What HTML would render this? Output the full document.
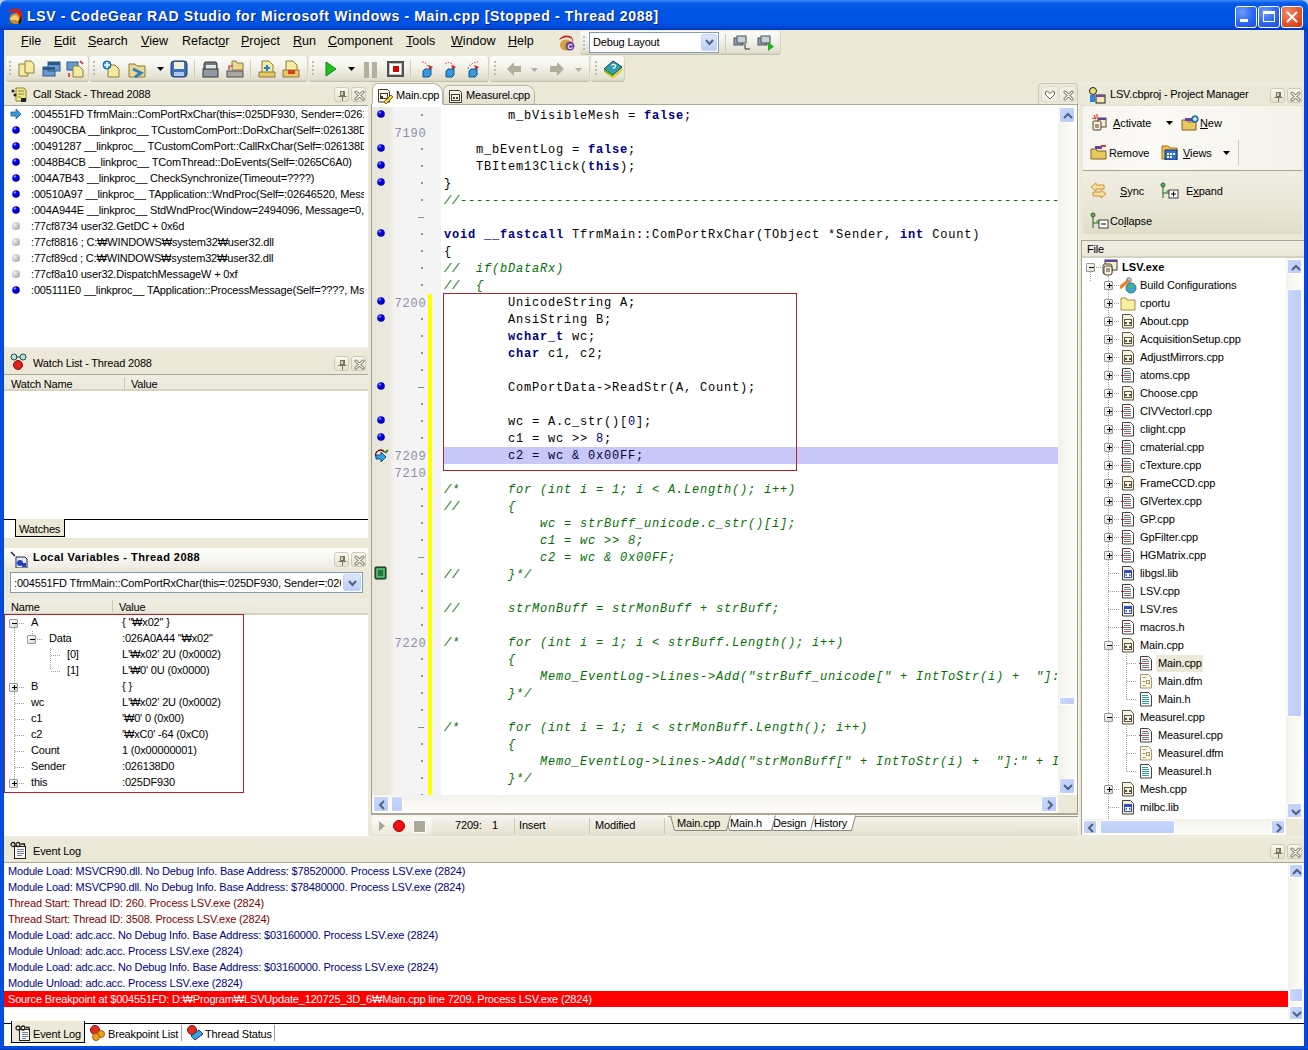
<!DOCTYPE html><html><head><meta charset="utf-8"><style>
html,body{margin:0;padding:0;}
body{width:1308px;height:1050px;overflow:hidden;position:relative;background:#ece9d8;font-family:"Liberation Sans",sans-serif;}
div{box-sizing:border-box;}
</style></head><body>
<div style="position:absolute;left:0px;top:0px;width:1308px;height:1050px;background:#ece9d8"></div>
<div style="position:absolute;left:0px;top:0px;width:8px;height:8px;background:#b8c8e0"></div>
<div style="position:absolute;left:1300px;top:0px;width:8px;height:8px;background:#b8c8e0"></div>
<div style="position:absolute;left:0px;top:0px;width:1308px;height:30px;background:linear-gradient(#3c8cf7 0px,#0a5ae8 3px,#0054e3 12px,#0055e6 22px,#0048d6 27px,#0036bd 30px);border-radius:7px 7px 0 0"></div>
<div style="position:absolute;left:0px;top:30px;width:4px;height:1020px;background:linear-gradient(90deg,#0843d6,#0054e3 2px,#0041d1 4px)"></div>
<div style="position:absolute;left:1304px;top:30px;width:4px;height:1020px;background:linear-gradient(90deg,#0041d1,#0054e3 2px,#0028a8 4px)"></div>
<div style="position:absolute;left:0px;top:1046px;width:1308px;height:4px;background:linear-gradient(#0045d7,#0054e3 2px,#0030b0 4px)"></div>
<svg style="position:absolute;left:6px;top:7px" width="18" height="18" viewBox="0 0 18 18"><ellipse cx="10" cy="11.5" rx="6.5" ry="5.5" fill="#c89030"/><path d="M4 13 Q5 8 10 8.5 Q13 9 12 14 Q9 12 4 13Z" fill="#f0d070"/><path d="M1.5 6 Q4 1 11 1.5 Q17 3 16.5 10 L15 15 Q14 8 11 6 Q6 4 1.5 6Z" fill="#d02018"/><path d="M15 9 Q17 13 14 17 L12 16 Z" fill="#301000"/><path d="M2 15 Q3 17 6 17" stroke="#208020" stroke-width="1.2" fill="none"/></svg>
<div style="position:absolute;left:27px;top:7.75px;white-space:pre;font:14px/16.80px 'Liberation Sans', sans-serif;color:#fff;letter-spacing:0.64px;font-weight:bold;text-shadow:1px 1px 0 #0a1e7a">LSV - CodeGear RAD Studio for Microsoft Windows - Main.cpp [Stopped - Thread 2088]</div>
<div style="position:absolute;left:1235px;top:6px;width:22px;height:22px;border:1px solid #fff;border-radius:3px;background:radial-gradient(circle at 30% 25%,#6c9cff,#2a62f0 60%,#1f50d8)"><div style="position:absolute;left:4px;top:12px;width:8px;height:3px;background:#fff"></div></div>
<div style="position:absolute;left:1258px;top:6px;width:22px;height:22px;border:1px solid #fff;border-radius:3px;background:radial-gradient(circle at 30% 25%,#6c9cff,#2a62f0 60%,#1f50d8)"><div style="position:absolute;left:4px;top:4px;width:12px;height:11px;border:1px solid #fff;border-top:3px solid #fff"></div></div>
<div style="position:absolute;left:1281px;top:6px;width:22px;height:22px;border:1px solid #fff;border-radius:3px;background:radial-gradient(circle at 30% 25%,#f08a6a,#e2522a 60%,#c83a18)"><svg style="position:absolute;left:4px;top:4px" width="12" height="12"><path d="M1 1L11 11M11 1L1 11" stroke="#fff" stroke-width="2"/></svg></div>
<div style="position:absolute;left:4px;top:30px;width:1300px;height:26px;background:#ece9d8"></div>
<div style="position:absolute;left:21px;top:34.17px;white-space:pre;font:12.5px/15.00px 'Liberation Sans', sans-serif;color:#000;letter-spacing:0.02px;"><u>F</u>ile</div>
<div style="position:absolute;left:54px;top:34.17px;white-space:pre;font:12.5px/15.00px 'Liberation Sans', sans-serif;color:#000;letter-spacing:0.02px;"><u>E</u>dit</div>
<div style="position:absolute;left:88px;top:34.17px;white-space:pre;font:12.5px/15.00px 'Liberation Sans', sans-serif;color:#000;letter-spacing:0.02px;"><u>S</u>earch</div>
<div style="position:absolute;left:141px;top:34.17px;white-space:pre;font:12.5px/15.00px 'Liberation Sans', sans-serif;color:#000;letter-spacing:0.02px;"><u>V</u>iew</div>
<div style="position:absolute;left:182px;top:34.17px;white-space:pre;font:12.5px/15.00px 'Liberation Sans', sans-serif;color:#000;letter-spacing:0.02px;">Refact<u>o</u>r</div>
<div style="position:absolute;left:241px;top:34.17px;white-space:pre;font:12.5px/15.00px 'Liberation Sans', sans-serif;color:#000;letter-spacing:0.02px;"><u>P</u>roject</div>
<div style="position:absolute;left:293px;top:34.17px;white-space:pre;font:12.5px/15.00px 'Liberation Sans', sans-serif;color:#000;letter-spacing:0.02px;"><u>R</u>un</div>
<div style="position:absolute;left:328px;top:34.17px;white-space:pre;font:12.5px/15.00px 'Liberation Sans', sans-serif;color:#000;letter-spacing:0.02px;"><u>C</u>omponent</div>
<div style="position:absolute;left:406px;top:34.17px;white-space:pre;font:12.5px/15.00px 'Liberation Sans', sans-serif;color:#000;letter-spacing:0.02px;"><u>T</u>ools</div>
<div style="position:absolute;left:451px;top:34.17px;white-space:pre;font:12.5px/15.00px 'Liberation Sans', sans-serif;color:#000;letter-spacing:0.02px;"><u>W</u>indow</div>
<div style="position:absolute;left:508px;top:34.17px;white-space:pre;font:12.5px/15.00px 'Liberation Sans', sans-serif;color:#000;letter-spacing:0.02px;"><u>H</u>elp</div>
<svg style="position:absolute;left:557px;top:34px" width="18" height="18" viewBox="0 0 18 18"><path d="M2 6 Q5 0 13 2 Q17 4 16 9 L15 5 Q11 2 6 4 Z" fill="#c8201a"/><ellipse cx="9" cy="11" rx="6" ry="5.5" fill="#d9a040"/><circle cx="13" cy="12" r="4.5" fill="#7040a0"/><text x="10.5" y="15" font-size="7" fill="#fff" font-family="Liberation Sans" font-weight="bold">C</text></svg>
<div style="position:absolute;left:580px;top:31px;width:201px;height:24px;background:linear-gradient(#fcfcf9,#f4f3ec 40%,#e3e0d0 90%,#d6d2c0);border-radius:3px;border-bottom:1px solid #c4c0ac;border-right:1px solid #d8d4c2"></div>
<div style="position:absolute;left:583px;top:36px;width:2px;height:2px;background:#c1bda8"></div>
<div style="position:absolute;left:583px;top:40px;width:2px;height:2px;background:#c1bda8"></div>
<div style="position:absolute;left:583px;top:44px;width:2px;height:2px;background:#c1bda8"></div>
<div style="position:absolute;left:583px;top:48px;width:2px;height:2px;background:#c1bda8"></div>
<div style="position:absolute;left:589px;top:32px;width:130px;height:21px;background:#fff;border:1px solid #7f9db9"></div>
<div style="position:absolute;left:593px;top:35.59px;white-space:pre;font:11px/13.20px 'Liberation Sans', sans-serif;color:#000;letter-spacing:-0.17px;">Debug Layout</div>
<div style="position:absolute;left:701px;top:34px;width:16px;height:17px;background:linear-gradient(#dfe8fb,#b9cdf6);border:1px solid #c3d3fd;border-radius:2px"><svg style="position:absolute;left:3px;top:4px" width="9" height="7"><path d="M1 1L4.5 5L8 1" stroke="#4d6185" stroke-width="2" fill="none"/></svg></div>
<div style="position:absolute;left:725px;top:34px;width:1px;height:18px;background:#d0ccb8"></div>
<svg style="position:absolute;left:733px;top:35px" width="18" height="16"><rect x="1" y="3" width="9" height="7" fill="#9aa8b4" stroke="#46505a"/><rect x="4" y="1" width="9" height="7" fill="#c8d0d8" stroke="#46505a"/><path d="M12 9v5h5" stroke="#303030" fill="none"/></svg>
<svg style="position:absolute;left:757px;top:35px" width="18" height="16"><rect x="1" y="3" width="9" height="7" fill="#9aa8b4" stroke="#46505a"/><rect x="4" y="1" width="9" height="7" fill="#c8d0d8" stroke="#46505a"/><path d="M11 7l6 4.5-6 4.5z" fill="#20b020"/></svg>
<div style="position:absolute;left:6px;top:56px;width:83px;height:26px;background:linear-gradient(#fcfcf9,#f4f3ec 40%,#e3e0d0 90%,#d6d2c0);border-radius:3px;border-bottom:1px solid #c4c0ac;border-right:1px solid #d8d4c2"></div>
<div style="position:absolute;left:90px;top:56px;width:218px;height:26px;background:linear-gradient(#fcfcf9,#f4f3ec 40%,#e3e0d0 90%,#d6d2c0);border-radius:3px;border-bottom:1px solid #c4c0ac;border-right:1px solid #d8d4c2"></div>
<div style="position:absolute;left:309px;top:56px;width:180px;height:26px;background:linear-gradient(#fcfcf9,#f4f3ec 40%,#e3e0d0 90%,#d6d2c0);border-radius:3px;border-bottom:1px solid #c4c0ac;border-right:1px solid #d8d4c2"></div>
<div style="position:absolute;left:490px;top:56px;width:100px;height:26px;background:linear-gradient(#fcfcf9,#f4f3ec 40%,#e3e0d0 90%,#d6d2c0);border-radius:3px;border-bottom:1px solid #c4c0ac;border-right:1px solid #d8d4c2"></div>
<div style="position:absolute;left:591px;top:56px;width:34px;height:26px;background:linear-gradient(#fcfcf9,#f4f3ec 40%,#e3e0d0 90%,#d6d2c0);border-radius:3px;border-bottom:1px solid #c4c0ac;border-right:1px solid #d8d4c2"></div>
<div style="position:absolute;left:9px;top:61px;width:2px;height:2px;background:#c1bda8"></div>
<div style="position:absolute;left:9px;top:65px;width:2px;height:2px;background:#c1bda8"></div>
<div style="position:absolute;left:9px;top:69px;width:2px;height:2px;background:#c1bda8"></div>
<div style="position:absolute;left:9px;top:73px;width:2px;height:2px;background:#c1bda8"></div>
<div style="position:absolute;left:93px;top:61px;width:2px;height:2px;background:#c1bda8"></div>
<div style="position:absolute;left:93px;top:65px;width:2px;height:2px;background:#c1bda8"></div>
<div style="position:absolute;left:93px;top:69px;width:2px;height:2px;background:#c1bda8"></div>
<div style="position:absolute;left:93px;top:73px;width:2px;height:2px;background:#c1bda8"></div>
<div style="position:absolute;left:312px;top:61px;width:2px;height:2px;background:#c1bda8"></div>
<div style="position:absolute;left:312px;top:65px;width:2px;height:2px;background:#c1bda8"></div>
<div style="position:absolute;left:312px;top:69px;width:2px;height:2px;background:#c1bda8"></div>
<div style="position:absolute;left:312px;top:73px;width:2px;height:2px;background:#c1bda8"></div>
<div style="position:absolute;left:494px;top:61px;width:2px;height:2px;background:#c1bda8"></div>
<div style="position:absolute;left:494px;top:65px;width:2px;height:2px;background:#c1bda8"></div>
<div style="position:absolute;left:494px;top:69px;width:2px;height:2px;background:#c1bda8"></div>
<div style="position:absolute;left:494px;top:73px;width:2px;height:2px;background:#c1bda8"></div>
<div style="position:absolute;left:595px;top:61px;width:2px;height:2px;background:#c1bda8"></div>
<div style="position:absolute;left:595px;top:65px;width:2px;height:2px;background:#c1bda8"></div>
<div style="position:absolute;left:595px;top:69px;width:2px;height:2px;background:#c1bda8"></div>
<div style="position:absolute;left:595px;top:73px;width:2px;height:2px;background:#c1bda8"></div>
<svg style="position:absolute;left:18px;top:60px" width="18" height="18"><path d="M1 4h6l3 3v9H1z" fill="#f5eaa0" stroke="#8c8040"/><path d="M7 1h6l3 3v9H7z" fill="#f5eaa0" stroke="#8c8040"/></svg>
<svg style="position:absolute;left:42px;top:60px" width="19" height="18"><rect x="1" y="7" width="12" height="9" fill="#6a9ad0" stroke="#2c5a8c"/><rect x="6" y="2" width="12" height="9" fill="#6a9ad0" stroke="#2c5a8c"/><rect x="6" y="2" width="12" height="3" fill="#2c5a8c"/><rect x="1" y="7" width="12" height="3" fill="#2c5a8c"/></svg>
<svg style="position:absolute;left:66px;top:60px" width="19" height="18"><rect x="1" y="2" width="11" height="8" fill="#6a9ad0" stroke="#2c5a8c"/><path d="M7 6h6l4 4v7H7z" fill="#f5eaa0" stroke="#8c8040"/><path d="M14 1l3 3M3 13l0 4" stroke="#d02020" stroke-width="1.5"/></svg>
<svg style="position:absolute;left:102px;top:60px" width="19" height="18"><path d="M6 5h7l4 4v8H6z" fill="#f5eaa0" stroke="#8c8040"/><circle cx="5" cy="5" r="4" fill="#3ca0e0" stroke="#1060a0"/><path d="M5 2v6M2 5h6" stroke="#fff" stroke-width="1.5"/></svg>
<svg style="position:absolute;left:128px;top:61px" width="20" height="18"><path d="M1 3h6l2 2h8v11H1z" fill="#e8d890" stroke="#8c7840"/><path d="M5 8l8 4-6 4" stroke="#3080c0" stroke-width="3" fill="none"/></svg>
<svg style="position:absolute;left:157px;top:67px" width="8" height="5"><path d="M0 0h7l-3.5 4z" fill="#000"/></svg>
<svg style="position:absolute;left:170px;top:60px" width="18" height="18"><rect x="1" y="1" width="16" height="16" rx="3" fill="#3a70b8" stroke="#1a3a70"/><rect x="4" y="2" width="10" height="7" fill="#f4f0d8"/><rect x="4" y="12" width="10" height="4" fill="#b0c8e8"/></svg>
<div style="position:absolute;left:194px;top:60px;width:1px;height:18px;background:#d0ccb8"></div>
<svg style="position:absolute;left:202px;top:60px" width="18" height="18"><rect x="2" y="2" width="13" height="13" rx="2" fill="#707880" stroke="#303840"/><rect x="4" y="5" width="10" height="6" fill="#e8e8e0"/><rect x="1" y="9" width="15" height="8" fill="#9098a0" stroke="#303840"/></svg>
<svg style="position:absolute;left:226px;top:60px" width="18" height="18"><path d="M6 1h4l1 2h6v7H6z" fill="#e8d890" stroke="#8c7840"/><rect x="1" y="11" width="16" height="6" fill="#a8a8a8" stroke="#505050"/><path d="M3 10v-4h4" stroke="#d02020" stroke-width="1.2" fill="none"/></svg>
<div style="position:absolute;left:250px;top:60px;width:1px;height:18px;background:#d0ccb8"></div>
<svg style="position:absolute;left:258px;top:60px" width="18" height="18"><path d="M4 1h7l4 4v8H4z" fill="#f5eaa0" stroke="#8c8040"/><path d="M1 12h16v5H1z" fill="#e8c860" stroke="#8c7840"/><path d="M9 5v6M6 8h6" stroke="#2080d0" stroke-width="2"/></svg>
<svg style="position:absolute;left:282px;top:60px" width="18" height="18"><path d="M4 1h7l4 4v8H4z" fill="#f5eaa0" stroke="#8c8040"/><path d="M1 10h16v7H1z" fill="#e8c860" stroke="#8c7840"/><rect x="6" y="10" width="7" height="4" fill="#d04020"/></svg>
<svg style="position:absolute;left:325px;top:61px" width="12" height="16"><path d="M1 1l10 7-10 7z" fill="#20c020" stroke="#108010"/></svg>
<svg style="position:absolute;left:348px;top:67px" width="8" height="5"><path d="M0 0h7l-3.5 4z" fill="#000"/></svg>
<div style="position:absolute;left:364px;top:62px;width:5px;height:16px;background:#b4b0a0"></div>
<div style="position:absolute;left:372px;top:62px;width:5px;height:16px;background:#b4b0a0"></div>
<div style="position:absolute;left:387px;top:61px;width:17px;height:16px;background:#fff;border:2px solid #505050;box-shadow:inset 0 0 0 1px #c0c0c0"><div style="position:absolute;left:4px;top:3px;width:6px;height:6px;background:#e00000"></div></div>
<div style="position:absolute;left:410px;top:60px;width:1px;height:18px;background:#d0ccb8"></div>
<svg style="position:absolute;left:420px;top:60px" width="16" height="18"><path d="M2 2q4 0 6 5" stroke="#d02020" stroke-dasharray="1.5 1.5" fill="none"/><path d="M8 5l5 2-3 3z" fill="#e02020"/><path d="M3 11l2-2h6v6l-2 2H3z" fill="#3a98e0" stroke="#10508c"/></svg>
<svg style="position:absolute;left:443px;top:60px" width="16" height="18"><path d="M2 4q5-4 10 3" stroke="#d02020" stroke-dasharray="1.5 1.5" fill="none"/><path d="M8 5l5 2-3 3z" fill="#e02020"/><path d="M3 11l2-2h6v6l-2 2H3z" fill="#3a98e0" stroke="#10508c"/></svg>
<svg style="position:absolute;left:466px;top:60px" width="16" height="18"><path d="M2 9q3-7 10-7" stroke="#d02020" stroke-dasharray="1.5 1.5" fill="none"/><path d="M8 5l5 2-3 3z" fill="#e02020"/><path d="M3 11l2-2h6v6l-2 2H3z" fill="#3a98e0" stroke="#10508c"/></svg>
<svg style="position:absolute;left:506px;top:61px" width="16" height="16"><path d="M1 8l7-7v4h7v6H8v4z" fill="#b0ae9c"/></svg>
<svg style="position:absolute;left:531px;top:68px" width="8" height="5"><path d="M0 0h7l-3.5 4z" fill="#b0ae9c"/></svg>
<svg style="position:absolute;left:549px;top:61px" width="16" height="16"><path d="M15 8l-7-7v4H1v6h7v4z" fill="#b0ae9c"/></svg>
<svg style="position:absolute;left:575px;top:68px" width="8" height="5"><path d="M0 0h7l-3.5 4z" fill="#b0ae9c"/></svg>
<svg style="position:absolute;left:602px;top:59px" width="22" height="20"><path d="M2 10l9-8 9 6-9 8z" fill="#30a0b0" stroke="#104050"/><path d="M2.5 12l8.5 6 9.5-8" stroke="#e0d020" stroke-width="2.2" fill="none"/><path d="M2 10v2l9 6v-2z" fill="#60b030"/><path d="M9.5 6.5q1.5-2 3.5-0.5t-1.5 3v1" stroke="#fff" stroke-width="1.3" fill="none"/></svg>
<div style="position:absolute;left:4px;top:82px;width:364px;height:754px;background:#fff"></div>
<div style="position:absolute;left:4px;top:82px;width:364px;height:24px;background:linear-gradient(#f1efe5,#ece9d9 4px,#ebe8d8);border-bottom:1px solid #aca899"></div>
<div style="position:absolute;left:33px;top:87.59px;white-space:pre;font:11px/13.20px 'Liberation Sans', sans-serif;color:#000;letter-spacing:-0.17px;">Call Stack - Thread 2088</div>
<svg style="position:absolute;left:10px;top:86px" width="18" height="18"><path d="M6 2h8l2 2v11H6z" fill="#eee890" stroke="#8c8030"/><path d="M8 5h6M8 8h6M8 11h3" stroke="#8c8030"/><circle cx="3" cy="5" r="1.5" fill="#222"/><circle cx="5" cy="9" r="1.5" fill="#222"/><rect x="11" y="12" width="5" height="4" fill="#222"/></svg>
<div style="position:absolute;left:334px;top:87px;width:15px;height:15px;border:1px solid #cfcbb6;border-radius:3px;background:linear-gradient(#f8f7f0,#e6e2d0)"><svg style="position:absolute;left:2px;top:2px" width="10" height="12"><rect x="3" y="1" width="5" height="5" fill="#77735a"/><rect x="4" y="2" width="2" height="3" fill="#d8d4c0"/><path d="M1.5 6.5h8M5.5 7v4" stroke="#77735a" fill="none"/></svg></div>
<div style="position:absolute;left:351px;top:87px;width:15px;height:15px;border:1px solid #cfcbb6;border-radius:3px;background:linear-gradient(#f8f7f0,#e6e2d0)"><svg style="position:absolute;left:2px;top:2px" width="11" height="11"><path d="M2 2L9 9M9 2L2 9" stroke="#6e6a55" stroke-width="3" stroke-linecap="round"/><path d="M2 2L9 9M9 2L2 9" stroke="#fff" stroke-width="1.2" stroke-linecap="round"/></svg></div>
<div style="position:absolute;left:4px;top:105px;width:360px;height:242px;overflow:hidden">
<svg style="position:absolute;left:6px;top:3px" width="12" height="12"><path d="M1 4h5V1l5 5-5 5V8H1z" fill="#3a9ad8" stroke="#1a60a0" stroke-width="0.8"/></svg>
<div style="position:absolute;left:27px;top:2.59px;white-space:pre;font:11px/13.20px 'Liberation Sans', sans-serif;color:#000;letter-spacing:-0.17px;">:004551FD TfrmMain::ComPortRxChar(this=:025DF930, Sender=:026138D0, Count=1)</div>
<svg style="position:absolute;left:7px;top:20px" width="10" height="10"><defs><radialGradient id="g12_25" cx="35%" cy="30%" r="70%"><stop offset="0" stop-color="#a0b0ff"/><stop offset="0.35" stop-color="#0000f0"/><stop offset="1" stop-color="#0000a0"/></radialGradient></defs><circle cx="5" cy="5" r="3.8" fill="url(#g12_25)"/></svg>
<div style="position:absolute;left:27px;top:18.59px;white-space:pre;font:11px/13.20px 'Liberation Sans', sans-serif;color:#000;letter-spacing:-0.17px;">:00490CBA __linkproc__ TCustomComPort::DoRxChar(Self=:026138D0, Count=1)</div>
<svg style="position:absolute;left:7px;top:36px" width="10" height="10"><defs><radialGradient id="g12_41" cx="35%" cy="30%" r="70%"><stop offset="0" stop-color="#a0b0ff"/><stop offset="0.35" stop-color="#0000f0"/><stop offset="1" stop-color="#0000a0"/></radialGradient></defs><circle cx="5" cy="5" r="3.8" fill="url(#g12_41)"/></svg>
<div style="position:absolute;left:27px;top:34.59px;white-space:pre;font:11px/13.20px 'Liberation Sans', sans-serif;color:#000;letter-spacing:-0.17px;">:00491287 __linkproc__ TCustomComPort::CallRxChar(Self=:026138D0)</div>
<svg style="position:absolute;left:7px;top:52px" width="10" height="10"><defs><radialGradient id="g12_57" cx="35%" cy="30%" r="70%"><stop offset="0" stop-color="#a0b0ff"/><stop offset="0.35" stop-color="#0000f0"/><stop offset="1" stop-color="#0000a0"/></radialGradient></defs><circle cx="5" cy="5" r="3.8" fill="url(#g12_57)"/></svg>
<div style="position:absolute;left:27px;top:50.59px;white-space:pre;font:11px/13.20px 'Liberation Sans', sans-serif;color:#000;letter-spacing:-0.17px;">:0048B4CB __linkproc__ TComThread::DoEvents(Self=:0265C6A0)</div>
<svg style="position:absolute;left:7px;top:68px" width="10" height="10"><defs><radialGradient id="g12_73" cx="35%" cy="30%" r="70%"><stop offset="0" stop-color="#a0b0ff"/><stop offset="0.35" stop-color="#0000f0"/><stop offset="1" stop-color="#0000a0"/></radialGradient></defs><circle cx="5" cy="5" r="3.8" fill="url(#g12_73)"/></svg>
<div style="position:absolute;left:27px;top:66.59px;white-space:pre;font:11px/13.20px 'Liberation Sans', sans-serif;color:#000;letter-spacing:-0.17px;">:004A7B43 __linkproc__ CheckSynchronize(Timeout=????)</div>
<svg style="position:absolute;left:7px;top:84px" width="10" height="10"><defs><radialGradient id="g12_89" cx="35%" cy="30%" r="70%"><stop offset="0" stop-color="#a0b0ff"/><stop offset="0.35" stop-color="#0000f0"/><stop offset="1" stop-color="#0000a0"/></radialGradient></defs><circle cx="5" cy="5" r="3.8" fill="url(#g12_89)"/></svg>
<div style="position:absolute;left:27px;top:82.59px;white-space:pre;font:11px/13.20px 'Liberation Sans', sans-serif;color:#000;letter-spacing:-0.17px;">:00510A97 __linkproc__ TApplication::WndProc(Self=:02646520, Message=????)</div>
<svg style="position:absolute;left:7px;top:100px" width="10" height="10"><defs><radialGradient id="g12_105" cx="35%" cy="30%" r="70%"><stop offset="0" stop-color="#a0b0ff"/><stop offset="0.35" stop-color="#0000f0"/><stop offset="1" stop-color="#0000a0"/></radialGradient></defs><circle cx="5" cy="5" r="3.8" fill="url(#g12_105)"/></svg>
<div style="position:absolute;left:27px;top:98.59px;white-space:pre;font:11px/13.20px 'Liberation Sans', sans-serif;color:#000;letter-spacing:-0.17px;">:004A944E __linkproc__ StdWndProc(Window=2494096, Message=0, WParam=0)</div>
<div style="position:absolute;left:8px;top:117px;width:8px;height:8px;border-radius:50%;background:radial-gradient(circle at 35% 35%,#f0f0f0,#b8b8b8 60%,#888);"></div>
<div style="position:absolute;left:27px;top:114.59px;white-space:pre;font:11px/13.20px 'Liberation Sans', sans-serif;color:#000;letter-spacing:-0.17px;">:77cf8734 user32.GetDC + 0x6d</div>
<div style="position:absolute;left:8px;top:133px;width:8px;height:8px;border-radius:50%;background:radial-gradient(circle at 35% 35%,#f0f0f0,#b8b8b8 60%,#888);"></div>
<div style="position:absolute;left:27px;top:130.59px;white-space:pre;font:11px/13.20px 'Liberation Sans', sans-serif;color:#000;letter-spacing:-0.17px;">:77cf8816 ; C:₩WINDOWS₩system32₩user32.dll</div>
<div style="position:absolute;left:8px;top:149px;width:8px;height:8px;border-radius:50%;background:radial-gradient(circle at 35% 35%,#f0f0f0,#b8b8b8 60%,#888);"></div>
<div style="position:absolute;left:27px;top:146.59px;white-space:pre;font:11px/13.20px 'Liberation Sans', sans-serif;color:#000;letter-spacing:-0.17px;">:77cf89cd ; C:₩WINDOWS₩system32₩user32.dll</div>
<div style="position:absolute;left:8px;top:165px;width:8px;height:8px;border-radius:50%;background:radial-gradient(circle at 35% 35%,#f0f0f0,#b8b8b8 60%,#888);"></div>
<div style="position:absolute;left:27px;top:162.59px;white-space:pre;font:11px/13.20px 'Liberation Sans', sans-serif;color:#000;letter-spacing:-0.17px;">:77cf8a10 user32.DispatchMessageW + 0xf</div>
<svg style="position:absolute;left:7px;top:180px" width="10" height="10"><defs><radialGradient id="g12_185" cx="35%" cy="30%" r="70%"><stop offset="0" stop-color="#a0b0ff"/><stop offset="0.35" stop-color="#0000f0"/><stop offset="1" stop-color="#0000a0"/></radialGradient></defs><circle cx="5" cy="5" r="3.8" fill="url(#g12_185)"/></svg>
<div style="position:absolute;left:27px;top:178.59px;white-space:pre;font:11px/13.20px 'Liberation Sans', sans-serif;color:#000;letter-spacing:-0.17px;">:005111E0 __linkproc__ TApplication::ProcessMessage(Self=????, Msg=????)</div>
</div>
<div style="position:absolute;left:4px;top:347px;width:364px;height:28px;background:linear-gradient(#f1efe5,#ece9d9 4px,#ebe8d8);border-bottom:1px solid #aca899"></div>
<div style="position:absolute;left:33px;top:356.59px;white-space:pre;font:11px/13.20px 'Liberation Sans', sans-serif;color:#000;letter-spacing:-0.17px;">Watch List - Thread 2088</div>
<svg style="position:absolute;left:10px;top:353px" width="18" height="18"><circle cx="4" cy="4" r="3" fill="#b8e0d8" stroke="#205050"/><circle cx="13" cy="4" r="3" fill="#b8e0d8" stroke="#205050"/><path d="M6 4h4" stroke="#205050"/><circle cx="8" cy="12" r="4.5" fill="#e02020" stroke="#801010"/></svg>
<div style="position:absolute;left:334px;top:356px;width:15px;height:15px;border:1px solid #cfcbb6;border-radius:3px;background:linear-gradient(#f8f7f0,#e6e2d0)"><svg style="position:absolute;left:2px;top:2px" width="10" height="12"><rect x="3" y="1" width="5" height="5" fill="#77735a"/><rect x="4" y="2" width="2" height="3" fill="#d8d4c0"/><path d="M1.5 6.5h8M5.5 7v4" stroke="#77735a" fill="none"/></svg></div>
<div style="position:absolute;left:351px;top:356px;width:15px;height:15px;border:1px solid #cfcbb6;border-radius:3px;background:linear-gradient(#f8f7f0,#e6e2d0)"><svg style="position:absolute;left:2px;top:2px" width="11" height="11"><path d="M2 2L9 9M9 2L2 9" stroke="#6e6a55" stroke-width="3" stroke-linecap="round"/><path d="M2 2L9 9M9 2L2 9" stroke="#fff" stroke-width="1.2" stroke-linecap="round"/></svg></div>
<div style="position:absolute;left:4px;top:375px;width:364px;height:16px;background:linear-gradient(#f0eee4,#ebe8da);border-bottom:2px solid #d6d2c2"></div>
<div style="position:absolute;left:124px;top:377px;width:1px;height:12px;background:#cbc7b4"></div>
<div style="position:absolute;left:11px;top:377.59px;white-space:pre;font:11px/13.20px 'Liberation Sans', sans-serif;color:#000;letter-spacing:-0.17px;">Watch Name</div>
<div style="position:absolute;left:131px;top:377.59px;white-space:pre;font:11px/13.20px 'Liberation Sans', sans-serif;color:#000;letter-spacing:-0.17px;">Value</div>
<div style="position:absolute;left:4px;top:519px;width:364px;height:19px;background:#fff;border-top:1px solid #000"></div>
<div style="position:absolute;left:15px;top:519px;width:50px;height:18px;background:#ece9d8;border:1px solid #000;border-top:none"></div>
<div style="position:absolute;left:19px;top:522.59px;white-space:pre;font:11px/13.20px 'Liberation Sans', sans-serif;color:#000;letter-spacing:-0.17px;">Watches</div>
<div style="position:absolute;left:4px;top:538px;width:364px;height:10px;background:#ece9d8"></div>
<div style="position:absolute;left:4px;top:548px;width:364px;height:21px;background:linear-gradient(#fefefd,#f7f6f1 50%,#eeece2);border-bottom:1px solid #aca899"></div>
<div style="position:absolute;left:33px;top:550.59px;white-space:pre;font:11px/13.20px 'Liberation Sans', sans-serif;color:#000;letter-spacing:0.45px;font-weight:bold">Local Variables - Thread 2088</div>
<svg style="position:absolute;left:10px;top:551px" width="18" height="18"><path d="M1 1l4 4" stroke="#222" stroke-width="1.5"/><path d="M6 6h9l2 2v9H6z" fill="#e8eef8" stroke="#202050"/><circle cx="10" cy="12" r="3" fill="#2040c0"/><rect x="12" y="12" width="4" height="4" fill="#2040c0"/></svg>
<div style="position:absolute;left:334px;top:552px;width:15px;height:15px;border:1px solid #cfcbb6;border-radius:3px;background:linear-gradient(#f8f7f0,#e6e2d0)"><svg style="position:absolute;left:2px;top:2px" width="10" height="12"><rect x="3" y="1" width="5" height="5" fill="#77735a"/><rect x="4" y="2" width="2" height="3" fill="#d8d4c0"/><path d="M1.5 6.5h8M5.5 7v4" stroke="#77735a" fill="none"/></svg></div>
<div style="position:absolute;left:351px;top:552px;width:15px;height:15px;border:1px solid #cfcbb6;border-radius:3px;background:linear-gradient(#f8f7f0,#e6e2d0)"><svg style="position:absolute;left:2px;top:2px" width="11" height="11"><path d="M2 2L9 9M9 2L2 9" stroke="#6e6a55" stroke-width="3" stroke-linecap="round"/><path d="M2 2L9 9M9 2L2 9" stroke="#fff" stroke-width="1.2" stroke-linecap="round"/></svg></div>
<div style="position:absolute;left:4px;top:568px;width:364px;height:30px;background:#ece9d8"></div>
<div style="position:absolute;left:10px;top:572px;width:353px;height:21px;background:#fff;border:1px solid #7f9db9"></div>
<div style="position:absolute;left:11px;top:573px;width:331px;height:19px;overflow:hidden">
<div style="position:absolute;left:3px;top:3.59px;white-space:pre;font:11px/13.20px 'Liberation Sans', sans-serif;color:#000;letter-spacing:-0.17px;">:004551FD TfrmMain::ComPortRxChar(this=:025DF930, Sender=:026138D0, Count=1)</div>
</div>
<div style="position:absolute;left:343px;top:574px;width:18px;height:17px;background:linear-gradient(#dfe8fb,#b9cdf6);border:1px solid #c3d3fd;border-radius:2px;box-shadow:-2px 0 0 #fff"><svg style="position:absolute;left:4px;top:5px" width="9" height="7"><path d="M1 1L4.5 5L8 1" stroke="#4d6185" stroke-width="2" fill="none"/></svg></div>
<div style="position:absolute;left:4px;top:598px;width:364px;height:17px;background:linear-gradient(#f0eee4,#ebe8da);border-bottom:2px solid #d6d2c2"></div>
<div style="position:absolute;left:112px;top:600px;width:1px;height:12px;background:#cbc7b4"></div>
<div style="position:absolute;left:11px;top:600.59px;white-space:pre;font:11px/13.20px 'Liberation Sans', sans-serif;color:#000;letter-spacing:-0.17px;">Name</div>
<div style="position:absolute;left:119px;top:600.59px;white-space:pre;font:11px/13.20px 'Liberation Sans', sans-serif;color:#000;letter-spacing:-0.17px;">Value</div>
<div style="position:absolute;left:14px;top:628px;width:1px;height:156px;background:repeating-linear-gradient(#a0a0a0 0 1px,transparent 1px 2px)"></div>
<div style="position:absolute;left:32px;top:631px;width:1px;height:3px;background:repeating-linear-gradient(#a0a0a0 0 1px,transparent 1px 2px)"></div>
<div style="position:absolute;left:50px;top:648px;width:1px;height:22px;background:repeating-linear-gradient(#a0a0a0 0 1px,transparent 1px 2px)"></div>
<div style="position:absolute;left:9px;top:619px;width:9px;height:9px;border:1px solid #919b9c;border-radius:1px;background:linear-gradient(135deg,#fff,#d8d4c8)"><div style="position:absolute;left:2px;top:3px;width:5px;height:1px;background:#000"></div></div>
<div style="position:absolute;left:19px;top:623px;width:6px;height:1px;background:repeating-linear-gradient(90deg,#a0a0a0 0 1px,transparent 1px 2px)"></div>
<div style="position:absolute;left:31px;top:615.59px;white-space:pre;font:11px/13.20px 'Liberation Sans', sans-serif;color:#000;letter-spacing:-0.17px;">A</div>
<div style="position:absolute;left:122px;top:615.59px;white-space:pre;font:11px/13.20px 'Liberation Sans', sans-serif;color:#000;letter-spacing:-0.17px;">{ &quot;₩x02&quot; }</div>
<div style="position:absolute;left:27px;top:635px;width:9px;height:9px;border:1px solid #919b9c;border-radius:1px;background:linear-gradient(135deg,#fff,#d8d4c8)"><div style="position:absolute;left:2px;top:3px;width:5px;height:1px;background:#000"></div></div>
<div style="position:absolute;left:37px;top:639px;width:6px;height:1px;background:repeating-linear-gradient(90deg,#a0a0a0 0 1px,transparent 1px 2px)"></div>
<div style="position:absolute;left:49px;top:631.59px;white-space:pre;font:11px/13.20px 'Liberation Sans', sans-serif;color:#000;letter-spacing:-0.17px;">Data</div>
<div style="position:absolute;left:122px;top:631.59px;white-space:pre;font:11px/13.20px 'Liberation Sans', sans-serif;color:#000;letter-spacing:-0.17px;">:026A0A44 &quot;₩x02&quot;</div>
<div style="position:absolute;left:51px;top:655px;width:10px;height:1px;background:repeating-linear-gradient(90deg,#a0a0a0 0 1px,transparent 1px 2px)"></div>
<div style="position:absolute;left:67px;top:647.59px;white-space:pre;font:11px/13.20px 'Liberation Sans', sans-serif;color:#000;letter-spacing:-0.17px;">[0]</div>
<div style="position:absolute;left:122px;top:647.59px;white-space:pre;font:11px/13.20px 'Liberation Sans', sans-serif;color:#000;letter-spacing:-0.17px;">L&#x27;₩x02&#x27; 2U (0x0002)</div>
<div style="position:absolute;left:51px;top:671px;width:10px;height:1px;background:repeating-linear-gradient(90deg,#a0a0a0 0 1px,transparent 1px 2px)"></div>
<div style="position:absolute;left:67px;top:663.59px;white-space:pre;font:11px/13.20px 'Liberation Sans', sans-serif;color:#000;letter-spacing:-0.17px;">[1]</div>
<div style="position:absolute;left:122px;top:663.59px;white-space:pre;font:11px/13.20px 'Liberation Sans', sans-serif;color:#000;letter-spacing:-0.17px;">L&#x27;₩0&#x27; 0U (0x0000)</div>
<div style="position:absolute;left:9px;top:683px;width:9px;height:9px;border:1px solid #919b9c;border-radius:1px;background:linear-gradient(135deg,#fff,#d8d4c8)"><div style="position:absolute;left:2px;top:3px;width:5px;height:1px;background:#000"></div><div style="position:absolute;left:4px;top:1px;width:1px;height:5px;background:#000"></div></div>
<div style="position:absolute;left:19px;top:687px;width:6px;height:1px;background:repeating-linear-gradient(90deg,#a0a0a0 0 1px,transparent 1px 2px)"></div>
<div style="position:absolute;left:31px;top:679.59px;white-space:pre;font:11px/13.20px 'Liberation Sans', sans-serif;color:#000;letter-spacing:-0.17px;">B</div>
<div style="position:absolute;left:122px;top:679.59px;white-space:pre;font:11px/13.20px 'Liberation Sans', sans-serif;color:#000;letter-spacing:-0.17px;">{ }</div>
<div style="position:absolute;left:15px;top:703px;width:10px;height:1px;background:repeating-linear-gradient(90deg,#a0a0a0 0 1px,transparent 1px 2px)"></div>
<div style="position:absolute;left:31px;top:695.59px;white-space:pre;font:11px/13.20px 'Liberation Sans', sans-serif;color:#000;letter-spacing:-0.17px;">wc</div>
<div style="position:absolute;left:122px;top:695.59px;white-space:pre;font:11px/13.20px 'Liberation Sans', sans-serif;color:#000;letter-spacing:-0.17px;">L&#x27;₩x02&#x27; 2U (0x0002)</div>
<div style="position:absolute;left:15px;top:719px;width:10px;height:1px;background:repeating-linear-gradient(90deg,#a0a0a0 0 1px,transparent 1px 2px)"></div>
<div style="position:absolute;left:31px;top:711.59px;white-space:pre;font:11px/13.20px 'Liberation Sans', sans-serif;color:#000;letter-spacing:-0.17px;">c1</div>
<div style="position:absolute;left:122px;top:711.59px;white-space:pre;font:11px/13.20px 'Liberation Sans', sans-serif;color:#000;letter-spacing:-0.17px;">&#x27;₩0&#x27; 0 (0x00)</div>
<div style="position:absolute;left:15px;top:735px;width:10px;height:1px;background:repeating-linear-gradient(90deg,#a0a0a0 0 1px,transparent 1px 2px)"></div>
<div style="position:absolute;left:31px;top:727.59px;white-space:pre;font:11px/13.20px 'Liberation Sans', sans-serif;color:#000;letter-spacing:-0.17px;">c2</div>
<div style="position:absolute;left:122px;top:727.59px;white-space:pre;font:11px/13.20px 'Liberation Sans', sans-serif;color:#000;letter-spacing:-0.17px;">&#x27;₩xC0&#x27; -64 (0xC0)</div>
<div style="position:absolute;left:15px;top:751px;width:10px;height:1px;background:repeating-linear-gradient(90deg,#a0a0a0 0 1px,transparent 1px 2px)"></div>
<div style="position:absolute;left:31px;top:743.59px;white-space:pre;font:11px/13.20px 'Liberation Sans', sans-serif;color:#000;letter-spacing:-0.17px;">Count</div>
<div style="position:absolute;left:122px;top:743.59px;white-space:pre;font:11px/13.20px 'Liberation Sans', sans-serif;color:#000;letter-spacing:-0.17px;">1 (0x00000001)</div>
<div style="position:absolute;left:15px;top:767px;width:10px;height:1px;background:repeating-linear-gradient(90deg,#a0a0a0 0 1px,transparent 1px 2px)"></div>
<div style="position:absolute;left:31px;top:759.59px;white-space:pre;font:11px/13.20px 'Liberation Sans', sans-serif;color:#000;letter-spacing:-0.17px;">Sender</div>
<div style="position:absolute;left:122px;top:759.59px;white-space:pre;font:11px/13.20px 'Liberation Sans', sans-serif;color:#000;letter-spacing:-0.17px;">:026138D0</div>
<div style="position:absolute;left:9px;top:779px;width:9px;height:9px;border:1px solid #919b9c;border-radius:1px;background:linear-gradient(135deg,#fff,#d8d4c8)"><div style="position:absolute;left:2px;top:3px;width:5px;height:1px;background:#000"></div><div style="position:absolute;left:4px;top:1px;width:1px;height:5px;background:#000"></div></div>
<div style="position:absolute;left:19px;top:783px;width:6px;height:1px;background:repeating-linear-gradient(90deg,#a0a0a0 0 1px,transparent 1px 2px)"></div>
<div style="position:absolute;left:31px;top:775.59px;white-space:pre;font:11px/13.20px 'Liberation Sans', sans-serif;color:#000;letter-spacing:-0.17px;">this</div>
<div style="position:absolute;left:122px;top:775.59px;white-space:pre;font:11px/13.20px 'Liberation Sans', sans-serif;color:#000;letter-spacing:-0.17px;">:025DF930</div>
<div style="position:absolute;left:4px;top:614px;width:240px;height:179px;border:1px solid #c0202a"></div>
<div style="position:absolute;left:368px;top:82px;width:3px;height:754px;background:#ece9d8"></div>
<div style="position:absolute;left:371px;top:83px;width:707px;height:21px;background:#ece9d8"></div>
<div style="position:absolute;left:443px;top:85px;width:92px;height:20px;background:linear-gradient(#f4f3ee,#e4e0cf);border:1px solid #b9b5a3;border-bottom:none;border-radius:6px 9px 0 0"></div>
<div style="position:absolute;left:372px;top:83px;width:71px;height:23px;background:linear-gradient(#fff,#fbfbf8);border:1px solid #b9b5a3;border-bottom:none;border-radius:6px 10px 0 0"></div>
<svg style="position:absolute;left:377px;top:88px" width="17" height="16"><path d="M1.5 1.5h9l2 2v10.5h-11z" fill="#f8f6ea" stroke="#403c30"/><rect x="3.5" y="5.5" width="7" height="5" fill="none" stroke="#403c30"/><rect x="4" y="8" width="2" height="2" fill="#403c30"/><path d="M7 14l7-7 2 2-7 7z" fill="#f0d030" stroke="#5a5010" stroke-width="0.8"/></svg>
<div style="position:absolute;left:396px;top:88.59px;white-space:pre;font:11px/13.20px 'Liberation Sans', sans-serif;color:#000;letter-spacing:-0.17px;">Main.cpp</div>
<svg style="position:absolute;left:448px;top:89px" width="16" height="15"><path d="M1.5 1.5h10l2 2v10h-12z" fill="#f8f6ea" stroke="#403c30"/><rect x="3.5" y="5.5" width="8" height="6" fill="none" stroke="#403c30"/><rect x="5" y="8" width="2" height="2" fill="#403c30"/><rect x="8" y="8" width="2" height="2" fill="#403c30"/></svg>
<div style="position:absolute;left:466px;top:88.59px;white-space:pre;font:11px/13.20px 'Liberation Sans', sans-serif;color:#000;letter-spacing:-0.17px;">Measurel.cpp</div>
<div style="position:absolute;left:1038px;top:83px;width:40px;height:22px;border:1px solid #cbc7b4;border-bottom:none;border-radius:4px 4px 0 0;background:#ece9d8"></div>
<div style="position:absolute;left:1041px;top:86px;width:17px;height:16px;border:1px solid #e0ddd0;border-radius:3px;background:#efede4"><svg style="position:absolute;left:2px;top:3px" width="12" height="10"><path d="M6 9L1.5 4.5Q0.5 1 3.5 1.2L6 3.5L8.5 1.2Q11.5 1 10.5 4.5Z" fill="#fff" stroke="#6a6650" stroke-width="1"/></svg></div>
<div style="position:absolute;left:1059px;top:86px;width:17px;height:16px;border:1px solid #e0ddd0;border-radius:3px;background:#efede4"><svg style="position:absolute;left:3px;top:3px" width="11" height="11"><path d="M2 2L9 9M9 2L2 9" stroke="#6e6a55" stroke-width="3" stroke-linecap="round"/><path d="M2 2L9 9M9 2L2 9" stroke="#fff" stroke-width="1.2" stroke-linecap="round"/></svg></div>
<div style="position:absolute;left:371px;top:104px;width:707px;height:711px;background:#fff;border-left:1px solid #9d9a8a;border-right:1px solid #9d9a8a;border-bottom:2px solid #aca899"></div>
<div style="position:absolute;left:443px;top:104px;width:634px;height:1px;background:#aca899"></div>
<div style="position:absolute;left:372px;top:107px;width:22px;height:688px;background:linear-gradient(90deg,#e9e7dc,#ebe9dd 80%,#f4f3ec)"></div>
<div style="position:absolute;left:394px;top:107px;width:47px;height:688px;background:#f4f4f4"></div>
<div style="position:absolute;left:428px;top:294px;width:4px;height:501px;background:#ffff00"></div>
<div style="position:absolute;left:444px;top:447px;width:614px;height:17px;background:#c8c8f8"></div>
<div style="position:absolute;left:444px;top:108px;width:614px;height:687px;overflow:hidden;font:12px/17px 'Liberation Mono', monospace;letter-spacing:0.8px;white-space:pre;color:#000">
<div style="position:absolute;left:0;top:0px;height:17px">        m_bVisibleMesh = <span style="color:#000080;font-weight:bold">false</span>;</div>
<div style="position:absolute;left:0;top:17px;height:17px"></div>
<div style="position:absolute;left:0;top:34px;height:17px">    m_bEventLog = <span style="color:#000080;font-weight:bold">false</span>;</div>
<div style="position:absolute;left:0;top:51px;height:17px">    TBItem13Click(<span style="color:#000080;font-weight:bold">this</span>);</div>
<div style="position:absolute;left:0;top:68px;height:17px">}</div>
<div style="position:absolute;left:0;top:85px;height:17px"><span style="color:#007000;font-style:italic">//------------------------------------------------------------------------------</span></div>
<div style="position:absolute;left:0;top:102px;height:17px"></div>
<div style="position:absolute;left:0;top:119px;height:17px"><span style="color:#000080;font-weight:bold">void</span> <span style="color:#000080;font-weight:bold">__fastcall</span> TfrmMain::ComPortRxChar(TObject *Sender, <span style="color:#000080;font-weight:bold">int</span> Count)</div>
<div style="position:absolute;left:0;top:136px;height:17px">{</div>
<div style="position:absolute;left:0;top:153px;height:17px"><span style="color:#007000;font-style:italic">//  if(bDataRx)</span></div>
<div style="position:absolute;left:0;top:170px;height:17px"><span style="color:#007000;font-style:italic">//  {</span></div>
<div style="position:absolute;left:0;top:187px;height:17px">        UnicodeString A;</div>
<div style="position:absolute;left:0;top:204px;height:17px">        AnsiString B;</div>
<div style="position:absolute;left:0;top:221px;height:17px">        <span style="color:#000080;font-weight:bold">wchar_t</span> wc;</div>
<div style="position:absolute;left:0;top:238px;height:17px">        <span style="color:#000080;font-weight:bold">char</span> c1, c2;</div>
<div style="position:absolute;left:0;top:255px;height:17px"></div>
<div style="position:absolute;left:0;top:272px;height:17px">        ComPortData-&gt;ReadStr(A, Count);</div>
<div style="position:absolute;left:0;top:289px;height:17px"></div>
<div style="position:absolute;left:0;top:306px;height:17px">        wc = A.c_str()[<span style="color:#000080">0</span>];</div>
<div style="position:absolute;left:0;top:323px;height:17px">        c1 = wc &gt;&gt; <span style="color:#000080">8</span>;</div>
<div style="position:absolute;left:0;top:340px;height:17px"><span style="color:#000040">        c2 = wc &amp; 0x00FF;</span></div>
<div style="position:absolute;left:0;top:357px;height:17px"></div>
<div style="position:absolute;left:0;top:374px;height:17px"><span style="color:#007000;font-style:italic">/*      for (int i = 1; i &lt; A.Length(); i++)</span></div>
<div style="position:absolute;left:0;top:391px;height:17px"><span style="color:#007000;font-style:italic">//      {</span></div>
<div style="position:absolute;left:0;top:408px;height:17px"><span style="color:#007000;font-style:italic">            wc = strBuff_unicode.c_str()[i];</span></div>
<div style="position:absolute;left:0;top:425px;height:17px"><span style="color:#007000;font-style:italic">            c1 = wc &gt;&gt; 8;</span></div>
<div style="position:absolute;left:0;top:442px;height:17px"><span style="color:#007000;font-style:italic">            c2 = wc &amp; 0x00FF;</span></div>
<div style="position:absolute;left:0;top:459px;height:17px"><span style="color:#007000;font-style:italic">//      }*/</span></div>
<div style="position:absolute;left:0;top:476px;height:17px"></div>
<div style="position:absolute;left:0;top:493px;height:17px"><span style="color:#007000;font-style:italic">//      strMonBuff = strMonBuff + strBuff;</span></div>
<div style="position:absolute;left:0;top:510px;height:17px"></div>
<div style="position:absolute;left:0;top:527px;height:17px"><span style="color:#007000;font-style:italic">/*      for (int i = 1; i &lt; strBuff.Length(); i++)</span></div>
<div style="position:absolute;left:0;top:544px;height:17px"><span style="color:#007000;font-style:italic">        {</span></div>
<div style="position:absolute;left:0;top:561px;height:17px"><span style="color:#007000;font-style:italic">            Memo_EventLog-&gt;Lines-&gt;Add(&quot;strBuff_unicode[&quot; + IntToStr(i) +  &quot;]: &quot; + strBuff_unicode[i]);</span></div>
<div style="position:absolute;left:0;top:578px;height:17px"><span style="color:#007000;font-style:italic">        }*/</span></div>
<div style="position:absolute;left:0;top:595px;height:17px"></div>
<div style="position:absolute;left:0;top:612px;height:17px"><span style="color:#007000;font-style:italic">/*      for (int i = 1; i &lt; strMonBuff.Length(); i++)</span></div>
<div style="position:absolute;left:0;top:629px;height:17px"><span style="color:#007000;font-style:italic">        {</span></div>
<div style="position:absolute;left:0;top:646px;height:17px"><span style="color:#007000;font-style:italic">            Memo_EventLog-&gt;Lines-&gt;Add(&quot;strMonBuff[&quot; + IntToStr(i) +  &quot;]:&quot; + IntToStr(strMonBuff[i]));</span></div>
<div style="position:absolute;left:0;top:663px;height:17px"><span style="color:#007000;font-style:italic">        }*/</span></div>
<div style="position:absolute;left:0;top:680px;height:17px"></div>
</div>
<div style="position:absolute;left:443px;top:293px;width:354px;height:178px;border:1px solid #b8202a"></div>
<svg style="position:absolute;left:376px;top:109px" width="10" height="10"><defs><radialGradient id="g381_114" cx="35%" cy="30%" r="70%"><stop offset="0" stop-color="#a0b0ff"/><stop offset="0.35" stop-color="#0000f0"/><stop offset="1" stop-color="#0000a0"/></radialGradient></defs><circle cx="5" cy="5" r="3.8" fill="url(#g381_114)"/></svg>
<div style="position:absolute;left:421px;top:114px;width:2px;height:2px;background:#9090a0"></div>
<div style="position:absolute;left:394.5px;top:126.61px;white-space:pre;font:12px/14.40px 'Liberation Mono', monospace;color:#8c8ca8;letter-spacing:0.8px;">7190</div>
<svg style="position:absolute;left:376px;top:143px" width="10" height="10"><defs><radialGradient id="g381_148" cx="35%" cy="30%" r="70%"><stop offset="0" stop-color="#a0b0ff"/><stop offset="0.35" stop-color="#0000f0"/><stop offset="1" stop-color="#0000a0"/></radialGradient></defs><circle cx="5" cy="5" r="3.8" fill="url(#g381_148)"/></svg>
<div style="position:absolute;left:421px;top:148px;width:2px;height:2px;background:#9090a0"></div>
<svg style="position:absolute;left:376px;top:160px" width="10" height="10"><defs><radialGradient id="g381_165" cx="35%" cy="30%" r="70%"><stop offset="0" stop-color="#a0b0ff"/><stop offset="0.35" stop-color="#0000f0"/><stop offset="1" stop-color="#0000a0"/></radialGradient></defs><circle cx="5" cy="5" r="3.8" fill="url(#g381_165)"/></svg>
<div style="position:absolute;left:421px;top:165px;width:2px;height:2px;background:#9090a0"></div>
<svg style="position:absolute;left:376px;top:177px" width="10" height="10"><defs><radialGradient id="g381_182" cx="35%" cy="30%" r="70%"><stop offset="0" stop-color="#a0b0ff"/><stop offset="0.35" stop-color="#0000f0"/><stop offset="1" stop-color="#0000a0"/></radialGradient></defs><circle cx="5" cy="5" r="3.8" fill="url(#g381_182)"/></svg>
<div style="position:absolute;left:421px;top:182px;width:2px;height:2px;background:#9090a0"></div>
<div style="position:absolute;left:421px;top:199px;width:2px;height:2px;background:#9090a0"></div>
<div style="position:absolute;left:418px;top:217px;width:6px;height:1px;background:#8c8ca0"></div>
<svg style="position:absolute;left:376px;top:228px" width="10" height="10"><defs><radialGradient id="g381_233" cx="35%" cy="30%" r="70%"><stop offset="0" stop-color="#a0b0ff"/><stop offset="0.35" stop-color="#0000f0"/><stop offset="1" stop-color="#0000a0"/></radialGradient></defs><circle cx="5" cy="5" r="3.8" fill="url(#g381_233)"/></svg>
<div style="position:absolute;left:421px;top:233px;width:2px;height:2px;background:#9090a0"></div>
<div style="position:absolute;left:421px;top:250px;width:2px;height:2px;background:#9090a0"></div>
<div style="position:absolute;left:421px;top:267px;width:2px;height:2px;background:#9090a0"></div>
<div style="position:absolute;left:421px;top:284px;width:2px;height:2px;background:#9090a0"></div>
<svg style="position:absolute;left:376px;top:296px" width="10" height="10"><defs><radialGradient id="g381_301" cx="35%" cy="30%" r="70%"><stop offset="0" stop-color="#a0b0ff"/><stop offset="0.35" stop-color="#0000f0"/><stop offset="1" stop-color="#0000a0"/></radialGradient></defs><circle cx="5" cy="5" r="3.8" fill="url(#g381_301)"/></svg>
<div style="position:absolute;left:394.5px;top:296.61px;white-space:pre;font:12px/14.40px 'Liberation Mono', monospace;color:#8c8ca8;letter-spacing:0.8px;">7200</div>
<svg style="position:absolute;left:376px;top:313px" width="10" height="10"><defs><radialGradient id="g381_318" cx="35%" cy="30%" r="70%"><stop offset="0" stop-color="#a0b0ff"/><stop offset="0.35" stop-color="#0000f0"/><stop offset="1" stop-color="#0000a0"/></radialGradient></defs><circle cx="5" cy="5" r="3.8" fill="url(#g381_318)"/></svg>
<div style="position:absolute;left:421px;top:318px;width:2px;height:2px;background:#9090a0"></div>
<div style="position:absolute;left:421px;top:335px;width:2px;height:2px;background:#9090a0"></div>
<div style="position:absolute;left:421px;top:352px;width:2px;height:2px;background:#9090a0"></div>
<div style="position:absolute;left:421px;top:369px;width:2px;height:2px;background:#9090a0"></div>
<svg style="position:absolute;left:376px;top:381px" width="10" height="10"><defs><radialGradient id="g381_386" cx="35%" cy="30%" r="70%"><stop offset="0" stop-color="#a0b0ff"/><stop offset="0.35" stop-color="#0000f0"/><stop offset="1" stop-color="#0000a0"/></radialGradient></defs><circle cx="5" cy="5" r="3.8" fill="url(#g381_386)"/></svg>
<div style="position:absolute;left:418px;top:387px;width:6px;height:1px;background:#8c8ca0"></div>
<div style="position:absolute;left:421px;top:403px;width:2px;height:2px;background:#9090a0"></div>
<svg style="position:absolute;left:376px;top:415px" width="10" height="10"><defs><radialGradient id="g381_420" cx="35%" cy="30%" r="70%"><stop offset="0" stop-color="#a0b0ff"/><stop offset="0.35" stop-color="#0000f0"/><stop offset="1" stop-color="#0000a0"/></radialGradient></defs><circle cx="5" cy="5" r="3.8" fill="url(#g381_420)"/></svg>
<div style="position:absolute;left:421px;top:420px;width:2px;height:2px;background:#9090a0"></div>
<svg style="position:absolute;left:376px;top:432px" width="10" height="10"><defs><radialGradient id="g381_437" cx="35%" cy="30%" r="70%"><stop offset="0" stop-color="#a0b0ff"/><stop offset="0.35" stop-color="#0000f0"/><stop offset="1" stop-color="#0000a0"/></radialGradient></defs><circle cx="5" cy="5" r="3.8" fill="url(#g381_437)"/></svg>
<div style="position:absolute;left:421px;top:437px;width:2px;height:2px;background:#9090a0"></div>
<div style="position:absolute;left:394.5px;top:449.61px;white-space:pre;font:12px/14.40px 'Liberation Mono', monospace;color:#8c8ca8;letter-spacing:0.8px;">7209</div>
<div style="position:absolute;left:394.5px;top:466.61px;white-space:pre;font:12px/14.40px 'Liberation Mono', monospace;color:#8c8ca8;letter-spacing:0.8px;">7210</div>
<div style="position:absolute;left:421px;top:488px;width:2px;height:2px;background:#9090a0"></div>
<div style="position:absolute;left:421px;top:505px;width:2px;height:2px;background:#9090a0"></div>
<div style="position:absolute;left:421px;top:522px;width:2px;height:2px;background:#9090a0"></div>
<div style="position:absolute;left:421px;top:539px;width:2px;height:2px;background:#9090a0"></div>
<div style="position:absolute;left:418px;top:557px;width:6px;height:1px;background:#8c8ca0"></div>
<div style="position:absolute;left:421px;top:573px;width:2px;height:2px;background:#9090a0"></div>
<div style="position:absolute;left:421px;top:590px;width:2px;height:2px;background:#9090a0"></div>
<div style="position:absolute;left:421px;top:607px;width:2px;height:2px;background:#9090a0"></div>
<div style="position:absolute;left:421px;top:624px;width:2px;height:2px;background:#9090a0"></div>
<div style="position:absolute;left:394.5px;top:636.61px;white-space:pre;font:12px/14.40px 'Liberation Mono', monospace;color:#8c8ca8;letter-spacing:0.8px;">7220</div>
<div style="position:absolute;left:421px;top:658px;width:2px;height:2px;background:#9090a0"></div>
<div style="position:absolute;left:421px;top:675px;width:2px;height:2px;background:#9090a0"></div>
<div style="position:absolute;left:421px;top:692px;width:2px;height:2px;background:#9090a0"></div>
<div style="position:absolute;left:421px;top:709px;width:2px;height:2px;background:#9090a0"></div>
<div style="position:absolute;left:418px;top:727px;width:6px;height:1px;background:#8c8ca0"></div>
<div style="position:absolute;left:421px;top:743px;width:2px;height:2px;background:#9090a0"></div>
<div style="position:absolute;left:421px;top:760px;width:2px;height:2px;background:#9090a0"></div>
<div style="position:absolute;left:421px;top:777px;width:2px;height:2px;background:#9090a0"></div>
<div style="position:absolute;left:421px;top:794px;width:2px;height:2px;background:#9090a0"></div>
<svg style="position:absolute;left:373px;top:447px" width="18" height="17"><path d="M2.8 9.5A5 5 0 0 1 11.5 5" stroke="#800000" stroke-width="1.3" fill="none"/><path d="M3 8h5V5l5 5-5 5v-3H3z" fill="#3aa0e8" stroke="#0a4a80" stroke-width="0.9"/><path d="M12 6l3-3" stroke="#208030" stroke-width="1.8"/></svg>
<svg style="position:absolute;left:374px;top:565px" width="14" height="16"><rect x="1" y="2" width="11" height="12" rx="1" fill="#1f7a3a" stroke="#0a2a10"/><rect x="3" y="4" width="7" height="8" fill="none" stroke="#90d8a0"/></svg>
<div style="position:absolute;left:1058px;top:106px;width:18px;height:689px;background:linear-gradient(90deg,#f3f1ec,#fefefa)"></div>
<div style="position:absolute;left:1059px;top:107px;width:16px;height:16px;border:1px solid #fff;border-radius:2px;background:linear-gradient(135deg,#c8d6fb,#b8cbf7)"><svg style="position:absolute;left:3.0px;top:4.0px" width="10" height="7"><path d="M1 6L5 2L9 6" stroke="#4d6185" stroke-width="2" fill="none"/></svg></div>
<div style="position:absolute;left:1059px;top:778px;width:16px;height:16px;border:1px solid #fff;border-radius:2px;background:linear-gradient(135deg,#c8d6fb,#b8cbf7)"><svg style="position:absolute;left:3.0px;top:5.0px" width="10" height="7"><path d="M1 1L5 5L9 1" stroke="#4d6185" stroke-width="2" fill="none"/></svg></div>
<div style="position:absolute;left:1059px;top:697px;width:16px;height:8px;border:1px solid #fff;border-radius:2px;background:linear-gradient(90deg,#c8d6fb,#bacdf8)"></div>
<div style="position:absolute;left:1058px;top:795px;width:19px;height:18px;background:#ece9d8"></div>
<div style="position:absolute;left:372px;top:795px;width:686px;height:18px;background:linear-gradient(#f3f1ec,#fefefa)"></div>
<div style="position:absolute;left:373px;top:796px;width:16px;height:16px;border:1px solid #fff;border-radius:2px;background:linear-gradient(135deg,#c8d6fb,#b8cbf7)"><svg style="position:absolute;left:4.0px;top:3.0px" width="7" height="10"><path d="M6 1L2 5L6 9" stroke="#4d6185" stroke-width="2" fill="none"/></svg></div>
<div style="position:absolute;left:1041px;top:796px;width:16px;height:16px;border:1px solid #fff;border-radius:2px;background:linear-gradient(135deg,#c8d6fb,#b8cbf7)"><svg style="position:absolute;left:5.0px;top:3.0px" width="7" height="10"><path d="M1 1L5 5L1 9" stroke="#4d6185" stroke-width="2" fill="none"/></svg></div>
<div style="position:absolute;left:391px;top:796px;width:12px;height:16px;border:1px solid #fff;border-radius:2px;background:linear-gradient(#c8d6fb,#bacdf8)"></div>
<div style="position:absolute;left:371px;top:815px;width:707px;height:21px;background:linear-gradient(#f6f5ef,#ebe8da 60%,#e4e0d0)"></div>
<div style="position:absolute;left:372px;top:817px;width:60px;height:18px;background:linear-gradient(#fbfbf8,#ece9dc);border-radius:3px"></div>
<svg style="position:absolute;left:377px;top:819px" width="10" height="14"><path d="M2 2l6 5-6 5z" fill="#a8a498"/></svg>
<svg style="position:absolute;left:393px;top:820px" width="12" height="12"><circle cx="6" cy="6" r="5.5" fill="#ee1010" stroke="#b00000"/></svg>
<div style="position:absolute;left:413px;top:820px;width:11px;height:11px;background:#aca89a;border:1px solid #fff;box-sizing:content-box"></div>
<div style="position:absolute;left:455px;top:818.59px;white-space:pre;font:11px/13.20px 'Liberation Sans', sans-serif;color:#000;letter-spacing:-0.17px;">7209:</div>
<div style="position:absolute;left:492px;top:818.59px;white-space:pre;font:11px/13.20px 'Liberation Sans', sans-serif;color:#000;letter-spacing:-0.17px;">1</div>
<div style="position:absolute;left:514px;top:818px;width:1px;height:16px;background:#cfcbb8"></div>
<div style="position:absolute;left:519px;top:818.59px;white-space:pre;font:11px/13.20px 'Liberation Sans', sans-serif;color:#000;letter-spacing:-0.17px;">Insert</div>
<div style="position:absolute;left:589px;top:818px;width:1px;height:16px;background:#cfcbb8"></div>
<div style="position:absolute;left:595px;top:818.59px;white-space:pre;font:11px/13.20px 'Liberation Sans', sans-serif;color:#000;letter-spacing:-0.17px;">Modified</div>
<div style="position:absolute;left:664px;top:818px;width:1px;height:16px;background:#cfcbb8"></div>
<div style="position:absolute;left:668px;top:816px;width:410px;height:1px;background:#9d9a8a"></div>
<svg style="position:absolute;left:805px;top:815px" width="52" height="17"><path d="M0.5 0.5 L4.5 15.5 H46.5 L50.5 0.5" fill="#fff" stroke="#8a8676"/></svg>
<div style="position:absolute;left:814px;top:816.59px;white-space:pre;font:11px/13.20px 'Liberation Sans', sans-serif;color:#000;letter-spacing:-0.17px;">History</div>
<svg style="position:absolute;left:768px;top:815px" width="48" height="17"><path d="M0.5 0.5 L4.5 15.5 H42.5 L46.5 0.5" fill="#fff" stroke="#8a8676"/></svg>
<div style="position:absolute;left:773px;top:816.59px;white-space:pre;font:11px/13.20px 'Liberation Sans', sans-serif;color:#000;letter-spacing:-0.17px;">Design</div>
<svg style="position:absolute;left:725px;top:815px" width="52" height="17"><path d="M0.5 0.5 L4.5 15.5 H46.5 L50.5 0.5" fill="#fff" stroke="#8a8676"/></svg>
<div style="position:absolute;left:730px;top:816.59px;white-space:pre;font:11px/13.20px 'Liberation Sans', sans-serif;color:#000;letter-spacing:-0.17px;">Main.h</div>
<svg style="position:absolute;left:670px;top:815px" width="62" height="17"><path d="M0.5 0.5 L4.5 15.5 H56.5 L60.5 0.5" fill="#ece9d8" stroke="#8a8676"/></svg>
<div style="position:absolute;left:677px;top:816.59px;white-space:pre;font:11px/13.20px 'Liberation Sans', sans-serif;color:#000;letter-spacing:-0.17px;">Main.cpp</div>
<div style="position:absolute;left:1078px;top:82px;width:226px;height:754px;background:#ece9d8"></div>
<div style="position:absolute;left:1078px;top:105px;width:1px;height:731px;background:#f8f7f2"></div>
<div style="position:absolute;left:1081px;top:83px;width:223px;height:23px;background:linear-gradient(#f1efe5,#ece9d9 4px,#ebe8d8);border-bottom:1px solid #e4e0d0"></div>
<div style="position:absolute;left:1110px;top:87.59px;white-space:pre;font:11px/13.20px 'Liberation Sans', sans-serif;color:#000;letter-spacing:-0.17px;">LSV.cbproj - Project Manager</div>
<svg style="position:absolute;left:1087px;top:86px" width="19" height="18"><circle cx="6" cy="5" r="3.5" fill="#f0e070" stroke="#202020"/><rect x="3" y="9" width="5" height="7" fill="#3080e0"/><rect x="9" y="9" width="9" height="8" fill="#f4e8b0" stroke="#202020"/><rect x="9" y="9" width="9" height="2" fill="#8040a0"/></svg>
<div style="position:absolute;left:1270px;top:88px;width:15px;height:15px;border:1px solid #cfcbb6;border-radius:3px;background:linear-gradient(#f8f7f0,#e6e2d0)"><svg style="position:absolute;left:2px;top:2px" width="10" height="12"><rect x="3" y="1" width="5" height="5" fill="#77735a"/><rect x="4" y="2" width="2" height="3" fill="#d8d4c0"/><path d="M1.5 6.5h8M5.5 7v4" stroke="#77735a" fill="none"/></svg></div>
<div style="position:absolute;left:1287px;top:88px;width:15px;height:15px;border:1px solid #cfcbb6;border-radius:3px;background:linear-gradient(#f8f7f0,#e6e2d0)"><svg style="position:absolute;left:2px;top:2px" width="11" height="11"><path d="M2 2L9 9M9 2L2 9" stroke="#6e6a55" stroke-width="3" stroke-linecap="round"/><path d="M2 2L9 9M9 2L2 9" stroke="#fff" stroke-width="1.2" stroke-linecap="round"/></svg></div>
<div style="position:absolute;left:1083px;top:106px;width:219px;height:64px;background:linear-gradient(90deg,#f6f5f0,#fbfaf6 30%,#f3f2ea);border-radius:2px"></div>
<div style="position:absolute;left:1083px;top:170px;width:219px;height:64px;background:linear-gradient(#f0eee4,#e9e6d6 60%,#e0dcc8);border-top:1px solid #a8a490;border-radius:0 0 2px 2px"></div>
<svg style="position:absolute;left:1091px;top:114px" width="17" height="17"><path d="M3 1l2 4M1 4l4 1M6 0v4" stroke="#f04010" stroke-width="1.2"/><rect x="7" y="4" width="8" height="9" fill="#f8f0d0" stroke="#504030"/><rect x="7" y="4" width="8" height="2" fill="#6040a0"/><rect x="2" y="7" width="8" height="9" rx="1" fill="#f8f0d8" stroke="#504030"/><path d="M4 11h4M4 13h4" stroke="#504030"/></svg>
<div style="position:absolute;left:1113px;top:116.59px;white-space:pre;font:11px/13.20px 'Liberation Sans', sans-serif;color:#000;letter-spacing:-0.1px;"><u>A</u>ctivate</div>
<svg style="position:absolute;left:1166px;top:121px" width="8" height="5"><path d="M0 0h7l-3.5 4z" fill="#000"/></svg>
<svg style="position:absolute;left:1181px;top:115px" width="18" height="16"><path d="M1 5h5l1 2h8v8H1z" fill="#e8c860" stroke="#806020"/><rect x="4" y="3" width="8" height="3" fill="#6040a0"/><circle cx="14" cy="4" r="3.2" fill="#40b0e0" stroke="#105080"/><path d="M14 2v4M12 4h4" stroke="#fff"/></svg>
<div style="position:absolute;left:1200px;top:116.59px;white-space:pre;font:11px/13.20px 'Liberation Sans', sans-serif;color:#000;letter-spacing:-0.1px;"><u>N</u>ew</div>
<svg style="position:absolute;left:1090px;top:144px" width="18" height="16"><path d="M1 5h5l1 2h9v8H1z" fill="#e8c860" stroke="#806020"/><rect x="5" y="2" width="7" height="3" fill="#6040a0"/><rect x="11" y="1" width="5" height="2" fill="#e04020"/></svg>
<div style="position:absolute;left:1109px;top:146.59px;white-space:pre;font:11px/13.20px 'Liberation Sans', sans-serif;color:#000;letter-spacing:-0.1px;">Remove</div>
<svg style="position:absolute;left:1161px;top:144px" width="17" height="16"><path d="M1 2h6l2 2h7v11H1z" fill="#f0c040" stroke="#a07010"/><rect x="4" y="6" width="12" height="10" fill="#3070d0" stroke="#103080"/><rect x="6" y="9" width="2" height="2" fill="#fff"/><rect x="9" y="9" width="2" height="2" fill="#fff"/><rect x="12" y="9" width="2" height="2" fill="#fff"/><rect x="6" y="12" width="2" height="2" fill="#fff"/><rect x="9" y="12" width="2" height="2" fill="#fff"/></svg>
<div style="position:absolute;left:1183px;top:146.59px;white-space:pre;font:11px/13.20px 'Liberation Sans', sans-serif;color:#000;letter-spacing:-0.1px;"><u>V</u>iews</div>
<svg style="position:absolute;left:1223px;top:151px" width="8" height="5"><path d="M0 0h7l-3.5 4z" fill="#000"/></svg>
<div style="position:absolute;left:1238px;top:140px;width:1px;height:26px;background:#d0ccb8"></div>
<svg style="position:absolute;left:1090px;top:182px" width="18" height="17"><path d="M6 1L1 5l5 4V7h8V3H6z" fill="#f8e0a0" stroke="#d09030"/><path d="M11 8l5 4-5 4v-2H3v-4h8z" fill="#f8e0a0" stroke="#d09030"/></svg>
<div style="position:absolute;left:1120px;top:184.59px;white-space:pre;font:11px/13.20px 'Liberation Sans', sans-serif;color:#000;letter-spacing:-0.1px;"><u>S</u>ync</div>
<svg style="position:absolute;left:1160px;top:182px" width="19" height="17"><circle cx="3" cy="3" r="2" fill="#60b060" stroke="#206020"/><path d="M3 5v11M3 11h4" stroke="#206020"/><circle cx="8" cy="10" r="2" fill="#60b060"/><rect x="9" y="8" width="9" height="8" fill="#fff" stroke="#404040"/><path d="M13.5 9.5v5M11 12h5" stroke="#000"/></svg>
<div style="position:absolute;left:1186px;top:184.59px;white-space:pre;font:11px/13.20px 'Liberation Sans', sans-serif;color:#000;letter-spacing:-0.1px;">E<u>x</u>pand</div>
<svg style="position:absolute;left:1090px;top:212px" width="19" height="17"><circle cx="3" cy="3" r="2" fill="#60b060" stroke="#206020"/><path d="M3 5v11M3 11h4" stroke="#206020"/><circle cx="8" cy="10" r="2" fill="#60b060"/><rect x="9" y="8" width="9" height="8" fill="#fff" stroke="#404040"/><path d="M11 12h5" stroke="#000"/></svg>
<div style="position:absolute;left:1110px;top:214.59px;white-space:pre;font:11px/13.20px 'Liberation Sans', sans-serif;color:#000;letter-spacing:-0.1px;">Co<u>l</u>lapse</div>
<div style="position:absolute;left:1081px;top:240px;width:223px;height:595px;background:#fff;border:1px solid #a8a490;border-right:none"></div>
<div style="position:absolute;left:1082px;top:241px;width:222px;height:17px;background:linear-gradient(#f0eee4,#ebe8da);border-bottom:2px solid #d6d2c2"></div>
<div style="position:absolute;left:1087px;top:242.59px;white-space:pre;font:11px/13.20px 'Liberation Sans', sans-serif;color:#000;letter-spacing:-0.17px;">File</div>
<div style="position:absolute;left:1082px;top:258px;width:204px;height:561px;overflow:hidden">
<div style="position:absolute;left:8px;top:14px;width:1px;height:10px;background:repeating-linear-gradient(#a0a0a0 0 1px,transparent 1px 2px)"></div>
<div style="position:absolute;left:26px;top:18px;width:1px;height:560px;background:repeating-linear-gradient(#a0a0a0 0 1px,transparent 1px 2px)"></div>
<div style="position:absolute;left:44px;top:396px;width:1px;height:45px;background:repeating-linear-gradient(#a0a0a0 0 1px,transparent 1px 2px)"></div>
<div style="position:absolute;left:44px;top:468px;width:1px;height:45px;background:repeating-linear-gradient(#a0a0a0 0 1px,transparent 1px 2px)"></div>
<div style="position:absolute;left:4px;top:5px;width:9px;height:9px;border:1px solid #919b9c;border-radius:1px;background:linear-gradient(135deg,#fff,#d8d4c8)"><div style="position:absolute;left:2px;top:3px;width:5px;height:1px;background:#000"></div></div>
<div style="position:absolute;left:14px;top:9px;width:6px;height:1px;background:repeating-linear-gradient(90deg,#a0a0a0 0 1px,transparent 1px 2px)"></div>
<svg style="position:absolute;left:20px;top:1px" width="16" height="17"><rect x="3" y="1" width="12" height="10" fill="#f8f0c8" stroke="#404040"/><rect x="3" y="1" width="12" height="2" fill="#6040a0"/><rect x="1" y="5" width="9" height="10" rx="2" fill="#f4f0e0" stroke="#504030"/><rect x="2" y="7" width="8" height="9" rx="2" fill="#f8f4e8" stroke="#504030"/><path d="M4 10h4M4 12h4" stroke="#504030"/></svg>
<div style="position:absolute;left:40px;top:2.59px;white-space:pre;font:11px/13.20px 'Liberation Sans', sans-serif;color:#000;letter-spacing:0.1px;font-weight:bold">LSV.exe</div>
<div style="position:absolute;left:22px;top:23px;width:9px;height:9px;border:1px solid #919b9c;border-radius:1px;background:linear-gradient(135deg,#fff,#d8d4c8)"><div style="position:absolute;left:2px;top:3px;width:5px;height:1px;background:#000"></div><div style="position:absolute;left:4px;top:1px;width:1px;height:5px;background:#000"></div></div>
<div style="position:absolute;left:32px;top:27px;width:6px;height:1px;background:repeating-linear-gradient(90deg,#a0a0a0 0 1px,transparent 1px 2px)"></div>
<svg style="position:absolute;left:38px;top:19px" width="17" height="17"><path d="M1 10l7-6" stroke="#f08030" stroke-width="3.5" stroke-linecap="round"/><circle cx="9" cy="3" r="2" fill="none" stroke="#909090" stroke-width="1.5"/><circle cx="11" cy="11" r="5" fill="#40a0d0" stroke="#208060"/><path d="M8 9q3 2 5-1" stroke="#50c050" stroke-width="2" fill="none"/></svg>
<div style="position:absolute;left:58px;top:20.59px;white-space:pre;font:11px/13.20px 'Liberation Sans', sans-serif;color:#000;letter-spacing:-0.1px;">Build Configurations</div>
<div style="position:absolute;left:22px;top:41px;width:9px;height:9px;border:1px solid #919b9c;border-radius:1px;background:linear-gradient(135deg,#fff,#d8d4c8)"><div style="position:absolute;left:2px;top:3px;width:5px;height:1px;background:#000"></div><div style="position:absolute;left:4px;top:1px;width:1px;height:5px;background:#000"></div></div>
<div style="position:absolute;left:32px;top:45px;width:6px;height:1px;background:repeating-linear-gradient(90deg,#a0a0a0 0 1px,transparent 1px 2px)"></div>
<svg style="position:absolute;left:38px;top:37px" width="16" height="16"><path d="M1 3h5l1 2h8v10H1z" fill="#f8f0a0" stroke="#a09040"/></svg>
<div style="position:absolute;left:58px;top:38.59px;white-space:pre;font:11px/13.20px 'Liberation Sans', sans-serif;color:#000;letter-spacing:-0.1px;">cportu</div>
<div style="position:absolute;left:22px;top:59px;width:9px;height:9px;border:1px solid #919b9c;border-radius:1px;background:linear-gradient(135deg,#fff,#d8d4c8)"><div style="position:absolute;left:2px;top:3px;width:5px;height:1px;background:#000"></div><div style="position:absolute;left:4px;top:1px;width:1px;height:5px;background:#000"></div></div>
<div style="position:absolute;left:32px;top:63px;width:6px;height:1px;background:repeating-linear-gradient(90deg,#a0a0a0 0 1px,transparent 1px 2px)"></div>
<svg style="position:absolute;left:38px;top:55px" width="16" height="16"><path d="M2.5 1.5h8l3 3v10.5h-11z" fill="#f6f3e2" stroke="#5a5440"/><rect x="4.5" y="6.5" width="7" height="6" fill="none" stroke="#5a5440"/><rect x="5" y="9" width="2" height="2" fill="#5a5440"/><rect x="9" y="9" width="2" height="2" fill="#5a5440"/></svg>
<div style="position:absolute;left:58px;top:56.59px;white-space:pre;font:11px/13.20px 'Liberation Sans', sans-serif;color:#000;letter-spacing:-0.1px;">About.cpp</div>
<div style="position:absolute;left:22px;top:77px;width:9px;height:9px;border:1px solid #919b9c;border-radius:1px;background:linear-gradient(135deg,#fff,#d8d4c8)"><div style="position:absolute;left:2px;top:3px;width:5px;height:1px;background:#000"></div><div style="position:absolute;left:4px;top:1px;width:1px;height:5px;background:#000"></div></div>
<div style="position:absolute;left:32px;top:81px;width:6px;height:1px;background:repeating-linear-gradient(90deg,#a0a0a0 0 1px,transparent 1px 2px)"></div>
<svg style="position:absolute;left:38px;top:73px" width="16" height="16"><path d="M2.5 1.5h8l3 3v10.5h-11z" fill="#f6f3e2" stroke="#5a5440"/><rect x="4.5" y="6.5" width="7" height="6" fill="none" stroke="#5a5440"/><rect x="5" y="9" width="2" height="2" fill="#5a5440"/><rect x="9" y="9" width="2" height="2" fill="#5a5440"/></svg>
<div style="position:absolute;left:58px;top:74.59px;white-space:pre;font:11px/13.20px 'Liberation Sans', sans-serif;color:#000;letter-spacing:-0.1px;">AcquisitionSetup.cpp</div>
<div style="position:absolute;left:22px;top:95px;width:9px;height:9px;border:1px solid #919b9c;border-radius:1px;background:linear-gradient(135deg,#fff,#d8d4c8)"><div style="position:absolute;left:2px;top:3px;width:5px;height:1px;background:#000"></div><div style="position:absolute;left:4px;top:1px;width:1px;height:5px;background:#000"></div></div>
<div style="position:absolute;left:32px;top:99px;width:6px;height:1px;background:repeating-linear-gradient(90deg,#a0a0a0 0 1px,transparent 1px 2px)"></div>
<svg style="position:absolute;left:38px;top:91px" width="16" height="16"><path d="M2.5 1.5h8l3 3v10.5h-11z" fill="#f6f3e2" stroke="#5a5440"/><rect x="4.5" y="6.5" width="7" height="6" fill="none" stroke="#5a5440"/><rect x="5" y="9" width="2" height="2" fill="#5a5440"/><rect x="9" y="9" width="2" height="2" fill="#5a5440"/></svg>
<div style="position:absolute;left:58px;top:92.59px;white-space:pre;font:11px/13.20px 'Liberation Sans', sans-serif;color:#000;letter-spacing:-0.1px;">AdjustMirrors.cpp</div>
<div style="position:absolute;left:22px;top:113px;width:9px;height:9px;border:1px solid #919b9c;border-radius:1px;background:linear-gradient(135deg,#fff,#d8d4c8)"><div style="position:absolute;left:2px;top:3px;width:5px;height:1px;background:#000"></div><div style="position:absolute;left:4px;top:1px;width:1px;height:5px;background:#000"></div></div>
<div style="position:absolute;left:32px;top:117px;width:6px;height:1px;background:repeating-linear-gradient(90deg,#a0a0a0 0 1px,transparent 1px 2px)"></div>
<svg style="position:absolute;left:38px;top:109px" width="16" height="16"><path d="M2.5 1.5h8l3 3v10.5h-11z" fill="#fff" stroke="#404040"/><path d="M4 4.5h6M4 8.5h7M4 12.5h7" stroke="#d04040"/><path d="M4 6.5h7M4 10.5h7" stroke="#30a0a0"/><path d="M1 8.5h3" stroke="#c02020"/></svg>
<div style="position:absolute;left:58px;top:110.59px;white-space:pre;font:11px/13.20px 'Liberation Sans', sans-serif;color:#000;letter-spacing:-0.1px;">atoms.cpp</div>
<div style="position:absolute;left:22px;top:131px;width:9px;height:9px;border:1px solid #919b9c;border-radius:1px;background:linear-gradient(135deg,#fff,#d8d4c8)"><div style="position:absolute;left:2px;top:3px;width:5px;height:1px;background:#000"></div><div style="position:absolute;left:4px;top:1px;width:1px;height:5px;background:#000"></div></div>
<div style="position:absolute;left:32px;top:135px;width:6px;height:1px;background:repeating-linear-gradient(90deg,#a0a0a0 0 1px,transparent 1px 2px)"></div>
<svg style="position:absolute;left:38px;top:127px" width="16" height="16"><path d="M2.5 1.5h8l3 3v10.5h-11z" fill="#f6f3e2" stroke="#5a5440"/><rect x="4.5" y="6.5" width="7" height="6" fill="none" stroke="#5a5440"/><rect x="5" y="9" width="2" height="2" fill="#5a5440"/><rect x="9" y="9" width="2" height="2" fill="#5a5440"/></svg>
<div style="position:absolute;left:58px;top:128.59px;white-space:pre;font:11px/13.20px 'Liberation Sans', sans-serif;color:#000;letter-spacing:-0.1px;">Choose.cpp</div>
<div style="position:absolute;left:22px;top:149px;width:9px;height:9px;border:1px solid #919b9c;border-radius:1px;background:linear-gradient(135deg,#fff,#d8d4c8)"><div style="position:absolute;left:2px;top:3px;width:5px;height:1px;background:#000"></div><div style="position:absolute;left:4px;top:1px;width:1px;height:5px;background:#000"></div></div>
<div style="position:absolute;left:32px;top:153px;width:6px;height:1px;background:repeating-linear-gradient(90deg,#a0a0a0 0 1px,transparent 1px 2px)"></div>
<svg style="position:absolute;left:38px;top:145px" width="16" height="16"><path d="M2.5 1.5h8l3 3v10.5h-11z" fill="#fff" stroke="#404040"/><path d="M4 4.5h6M4 8.5h7M4 12.5h7" stroke="#d04040"/><path d="M4 6.5h7M4 10.5h7" stroke="#30a0a0"/><path d="M1 8.5h3" stroke="#c02020"/></svg>
<div style="position:absolute;left:58px;top:146.59px;white-space:pre;font:11px/13.20px 'Liberation Sans', sans-serif;color:#000;letter-spacing:-0.1px;">CIVVectorI.cpp</div>
<div style="position:absolute;left:22px;top:167px;width:9px;height:9px;border:1px solid #919b9c;border-radius:1px;background:linear-gradient(135deg,#fff,#d8d4c8)"><div style="position:absolute;left:2px;top:3px;width:5px;height:1px;background:#000"></div><div style="position:absolute;left:4px;top:1px;width:1px;height:5px;background:#000"></div></div>
<div style="position:absolute;left:32px;top:171px;width:6px;height:1px;background:repeating-linear-gradient(90deg,#a0a0a0 0 1px,transparent 1px 2px)"></div>
<svg style="position:absolute;left:38px;top:163px" width="16" height="16"><path d="M2.5 1.5h8l3 3v10.5h-11z" fill="#fff" stroke="#404040"/><path d="M4 4.5h6M4 8.5h7M4 12.5h7" stroke="#d04040"/><path d="M4 6.5h7M4 10.5h7" stroke="#30a0a0"/><path d="M1 8.5h3" stroke="#c02020"/></svg>
<div style="position:absolute;left:58px;top:164.59px;white-space:pre;font:11px/13.20px 'Liberation Sans', sans-serif;color:#000;letter-spacing:-0.1px;">clight.cpp</div>
<div style="position:absolute;left:22px;top:185px;width:9px;height:9px;border:1px solid #919b9c;border-radius:1px;background:linear-gradient(135deg,#fff,#d8d4c8)"><div style="position:absolute;left:2px;top:3px;width:5px;height:1px;background:#000"></div><div style="position:absolute;left:4px;top:1px;width:1px;height:5px;background:#000"></div></div>
<div style="position:absolute;left:32px;top:189px;width:6px;height:1px;background:repeating-linear-gradient(90deg,#a0a0a0 0 1px,transparent 1px 2px)"></div>
<svg style="position:absolute;left:38px;top:181px" width="16" height="16"><path d="M2.5 1.5h8l3 3v10.5h-11z" fill="#fff" stroke="#404040"/><path d="M4 4.5h6M4 8.5h7M4 12.5h7" stroke="#d04040"/><path d="M4 6.5h7M4 10.5h7" stroke="#30a0a0"/><path d="M1 8.5h3" stroke="#c02020"/></svg>
<div style="position:absolute;left:58px;top:182.59px;white-space:pre;font:11px/13.20px 'Liberation Sans', sans-serif;color:#000;letter-spacing:-0.1px;">cmaterial.cpp</div>
<div style="position:absolute;left:22px;top:203px;width:9px;height:9px;border:1px solid #919b9c;border-radius:1px;background:linear-gradient(135deg,#fff,#d8d4c8)"><div style="position:absolute;left:2px;top:3px;width:5px;height:1px;background:#000"></div><div style="position:absolute;left:4px;top:1px;width:1px;height:5px;background:#000"></div></div>
<div style="position:absolute;left:32px;top:207px;width:6px;height:1px;background:repeating-linear-gradient(90deg,#a0a0a0 0 1px,transparent 1px 2px)"></div>
<svg style="position:absolute;left:38px;top:199px" width="16" height="16"><path d="M2.5 1.5h8l3 3v10.5h-11z" fill="#fff" stroke="#404040"/><path d="M4 4.5h6M4 8.5h7M4 12.5h7" stroke="#d04040"/><path d="M4 6.5h7M4 10.5h7" stroke="#30a0a0"/><path d="M1 8.5h3" stroke="#c02020"/></svg>
<div style="position:absolute;left:58px;top:200.59px;white-space:pre;font:11px/13.20px 'Liberation Sans', sans-serif;color:#000;letter-spacing:-0.1px;">cTexture.cpp</div>
<div style="position:absolute;left:22px;top:221px;width:9px;height:9px;border:1px solid #919b9c;border-radius:1px;background:linear-gradient(135deg,#fff,#d8d4c8)"><div style="position:absolute;left:2px;top:3px;width:5px;height:1px;background:#000"></div><div style="position:absolute;left:4px;top:1px;width:1px;height:5px;background:#000"></div></div>
<div style="position:absolute;left:32px;top:225px;width:6px;height:1px;background:repeating-linear-gradient(90deg,#a0a0a0 0 1px,transparent 1px 2px)"></div>
<svg style="position:absolute;left:38px;top:217px" width="16" height="16"><path d="M2.5 1.5h8l3 3v10.5h-11z" fill="#f6f3e2" stroke="#5a5440"/><rect x="4.5" y="6.5" width="7" height="6" fill="none" stroke="#5a5440"/><rect x="5" y="9" width="2" height="2" fill="#5a5440"/><rect x="9" y="9" width="2" height="2" fill="#5a5440"/></svg>
<div style="position:absolute;left:58px;top:218.59px;white-space:pre;font:11px/13.20px 'Liberation Sans', sans-serif;color:#000;letter-spacing:-0.1px;">FrameCCD.cpp</div>
<div style="position:absolute;left:22px;top:239px;width:9px;height:9px;border:1px solid #919b9c;border-radius:1px;background:linear-gradient(135deg,#fff,#d8d4c8)"><div style="position:absolute;left:2px;top:3px;width:5px;height:1px;background:#000"></div><div style="position:absolute;left:4px;top:1px;width:1px;height:5px;background:#000"></div></div>
<div style="position:absolute;left:32px;top:243px;width:6px;height:1px;background:repeating-linear-gradient(90deg,#a0a0a0 0 1px,transparent 1px 2px)"></div>
<svg style="position:absolute;left:38px;top:235px" width="16" height="16"><path d="M2.5 1.5h8l3 3v10.5h-11z" fill="#fff" stroke="#404040"/><path d="M4 4.5h6M4 8.5h7M4 12.5h7" stroke="#d04040"/><path d="M4 6.5h7M4 10.5h7" stroke="#30a0a0"/><path d="M1 8.5h3" stroke="#c02020"/></svg>
<div style="position:absolute;left:58px;top:236.59px;white-space:pre;font:11px/13.20px 'Liberation Sans', sans-serif;color:#000;letter-spacing:-0.1px;">GlVertex.cpp</div>
<div style="position:absolute;left:22px;top:257px;width:9px;height:9px;border:1px solid #919b9c;border-radius:1px;background:linear-gradient(135deg,#fff,#d8d4c8)"><div style="position:absolute;left:2px;top:3px;width:5px;height:1px;background:#000"></div><div style="position:absolute;left:4px;top:1px;width:1px;height:5px;background:#000"></div></div>
<div style="position:absolute;left:32px;top:261px;width:6px;height:1px;background:repeating-linear-gradient(90deg,#a0a0a0 0 1px,transparent 1px 2px)"></div>
<svg style="position:absolute;left:38px;top:253px" width="16" height="16"><path d="M2.5 1.5h8l3 3v10.5h-11z" fill="#fff" stroke="#404040"/><path d="M4 4.5h6M4 8.5h7M4 12.5h7" stroke="#d04040"/><path d="M4 6.5h7M4 10.5h7" stroke="#30a0a0"/><path d="M1 8.5h3" stroke="#c02020"/></svg>
<div style="position:absolute;left:58px;top:254.59px;white-space:pre;font:11px/13.20px 'Liberation Sans', sans-serif;color:#000;letter-spacing:-0.1px;">GP.cpp</div>
<div style="position:absolute;left:22px;top:275px;width:9px;height:9px;border:1px solid #919b9c;border-radius:1px;background:linear-gradient(135deg,#fff,#d8d4c8)"><div style="position:absolute;left:2px;top:3px;width:5px;height:1px;background:#000"></div><div style="position:absolute;left:4px;top:1px;width:1px;height:5px;background:#000"></div></div>
<div style="position:absolute;left:32px;top:279px;width:6px;height:1px;background:repeating-linear-gradient(90deg,#a0a0a0 0 1px,transparent 1px 2px)"></div>
<svg style="position:absolute;left:38px;top:271px" width="16" height="16"><path d="M2.5 1.5h8l3 3v10.5h-11z" fill="#fff" stroke="#404040"/><path d="M4 4.5h6M4 8.5h7M4 12.5h7" stroke="#d04040"/><path d="M4 6.5h7M4 10.5h7" stroke="#30a0a0"/><path d="M1 8.5h3" stroke="#c02020"/></svg>
<div style="position:absolute;left:58px;top:272.59px;white-space:pre;font:11px/13.20px 'Liberation Sans', sans-serif;color:#000;letter-spacing:-0.1px;">GpFilter.cpp</div>
<div style="position:absolute;left:22px;top:293px;width:9px;height:9px;border:1px solid #919b9c;border-radius:1px;background:linear-gradient(135deg,#fff,#d8d4c8)"><div style="position:absolute;left:2px;top:3px;width:5px;height:1px;background:#000"></div><div style="position:absolute;left:4px;top:1px;width:1px;height:5px;background:#000"></div></div>
<div style="position:absolute;left:32px;top:297px;width:6px;height:1px;background:repeating-linear-gradient(90deg,#a0a0a0 0 1px,transparent 1px 2px)"></div>
<svg style="position:absolute;left:38px;top:289px" width="16" height="16"><path d="M2.5 1.5h8l3 3v10.5h-11z" fill="#fff" stroke="#404040"/><path d="M4 4.5h6M4 8.5h7M4 12.5h7" stroke="#d04040"/><path d="M4 6.5h7M4 10.5h7" stroke="#30a0a0"/><path d="M1 8.5h3" stroke="#c02020"/></svg>
<div style="position:absolute;left:58px;top:290.59px;white-space:pre;font:11px/13.20px 'Liberation Sans', sans-serif;color:#000;letter-spacing:-0.1px;">HGMatrix.cpp</div>
<div style="position:absolute;left:26px;top:315px;width:12px;height:1px;background:repeating-linear-gradient(90deg,#a0a0a0 0 1px,transparent 1px 2px)"></div>
<svg style="position:absolute;left:38px;top:307px" width="16" height="16"><path d="M2.5 1.5h8l3 3v10.5h-11z" fill="#f4f0dc" stroke="#404040"/><rect x="4" y="5" width="8" height="3" fill="#3050c0"/><rect x="4.5" y="7.5" width="7" height="5" fill="#fff" stroke="#3050c0"/><path d="M7 9l-1.5 1L7 11M9 9l1.5 1L9 11" stroke="#202080" stroke-width="0.8" fill="none"/></svg>
<div style="position:absolute;left:58px;top:308.59px;white-space:pre;font:11px/13.20px 'Liberation Sans', sans-serif;color:#000;letter-spacing:-0.1px;">libgsl.lib</div>
<div style="position:absolute;left:26px;top:333px;width:12px;height:1px;background:repeating-linear-gradient(90deg,#a0a0a0 0 1px,transparent 1px 2px)"></div>
<svg style="position:absolute;left:38px;top:325px" width="16" height="16"><path d="M2.5 1.5h8l3 3v10.5h-11z" fill="#fff" stroke="#404040"/><path d="M4 4.5h6M4 8.5h7M4 12.5h7" stroke="#d04040"/><path d="M4 6.5h7M4 10.5h7" stroke="#30a0a0"/><path d="M1 8.5h3" stroke="#c02020"/></svg>
<div style="position:absolute;left:58px;top:326.59px;white-space:pre;font:11px/13.20px 'Liberation Sans', sans-serif;color:#000;letter-spacing:-0.1px;">LSV.cpp</div>
<div style="position:absolute;left:26px;top:351px;width:12px;height:1px;background:repeating-linear-gradient(90deg,#a0a0a0 0 1px,transparent 1px 2px)"></div>
<svg style="position:absolute;left:38px;top:343px" width="16" height="16"><path d="M2.5 1.5h8l3 3v10.5h-11z" fill="#f4f0dc" stroke="#404040"/><rect x="4" y="5" width="8" height="3" fill="#3050c0"/><rect x="4.5" y="7.5" width="7" height="5" fill="#fff" stroke="#3050c0"/><path d="M7 9l-1.5 1L7 11M9 9l1.5 1L9 11" stroke="#202080" stroke-width="0.8" fill="none"/></svg>
<div style="position:absolute;left:58px;top:344.59px;white-space:pre;font:11px/13.20px 'Liberation Sans', sans-serif;color:#000;letter-spacing:-0.1px;">LSV.res</div>
<div style="position:absolute;left:26px;top:369px;width:12px;height:1px;background:repeating-linear-gradient(90deg,#a0a0a0 0 1px,transparent 1px 2px)"></div>
<svg style="position:absolute;left:38px;top:361px" width="16" height="16"><path d="M2.5 1.5h8l3 3v10.5h-11z" fill="#fff" stroke="#404040"/><path d="M4 4.5h6M4 8.5h7M4 12.5h7" stroke="#d04040"/><path d="M4 6.5h7M4 10.5h7" stroke="#30a0a0"/><path d="M1 8.5h3" stroke="#c02020"/></svg>
<div style="position:absolute;left:58px;top:362.59px;white-space:pre;font:11px/13.20px 'Liberation Sans', sans-serif;color:#000;letter-spacing:-0.1px;">macros.h</div>
<div style="position:absolute;left:22px;top:383px;width:9px;height:9px;border:1px solid #919b9c;border-radius:1px;background:linear-gradient(135deg,#fff,#d8d4c8)"><div style="position:absolute;left:2px;top:3px;width:5px;height:1px;background:#000"></div></div>
<div style="position:absolute;left:32px;top:387px;width:6px;height:1px;background:repeating-linear-gradient(90deg,#a0a0a0 0 1px,transparent 1px 2px)"></div>
<svg style="position:absolute;left:38px;top:379px" width="16" height="16"><path d="M2.5 1.5h8l3 3v10.5h-11z" fill="#f6f3e2" stroke="#5a5440"/><rect x="4.5" y="6.5" width="7" height="6" fill="none" stroke="#5a5440"/><rect x="5" y="9" width="2" height="2" fill="#5a5440"/><rect x="9" y="9" width="2" height="2" fill="#5a5440"/></svg>
<div style="position:absolute;left:58px;top:380.59px;white-space:pre;font:11px/13.20px 'Liberation Sans', sans-serif;color:#000;letter-spacing:-0.1px;">Main.cpp</div>
<div style="position:absolute;left:45px;top:405px;width:10px;height:1px;background:repeating-linear-gradient(90deg,#a0a0a0 0 1px,transparent 1px 2px)"></div>
<svg style="position:absolute;left:56px;top:397px" width="16" height="16"><path d="M2.5 1.5h8l3 3v10.5h-11z" fill="#fff" stroke="#404040"/><path d="M4 4.5h6M4 8.5h7M4 12.5h7" stroke="#d04040"/><path d="M4 6.5h7M4 10.5h7" stroke="#30a0a0"/><path d="M1 8.5h3" stroke="#c02020"/></svg>
<div style="position:absolute;left:74px;top:397px;width:47px;height:17px;background:#ece9d8"></div>
<div style="position:absolute;left:76px;top:398.59px;white-space:pre;font:11px/13.20px 'Liberation Sans', sans-serif;color:#000;letter-spacing:-0.1px;">Main.cpp</div>
<div style="position:absolute;left:45px;top:423px;width:10px;height:1px;background:repeating-linear-gradient(90deg,#a0a0a0 0 1px,transparent 1px 2px)"></div>
<svg style="position:absolute;left:56px;top:415px" width="16" height="16"><path d="M2.5 1.5h8l3 3v10.5h-11z" fill="#fbf8ea" stroke="#a09870"/><path d="M4.5 4.5h3M4.5 8.5h3M4.5 12.5h3" stroke="#a09870"/><rect x="8.5" y="7.5" width="3" height="3" fill="none" stroke="#a09870"/></svg>
<div style="position:absolute;left:76px;top:416.59px;white-space:pre;font:11px/13.20px 'Liberation Sans', sans-serif;color:#000;letter-spacing:-0.1px;">Main.dfm</div>
<div style="position:absolute;left:45px;top:441px;width:10px;height:1px;background:repeating-linear-gradient(90deg,#a0a0a0 0 1px,transparent 1px 2px)"></div>
<svg style="position:absolute;left:56px;top:433px" width="16" height="16"><path d="M2.5 1.5h8l3 3v10.5h-11z" fill="#fff" stroke="#404040"/><path d="M4 4.5h6M4 6.5h7M4 8.5h7M4 10.5h7M4 12.5h7" stroke="#30a0a0"/></svg>
<div style="position:absolute;left:76px;top:434.59px;white-space:pre;font:11px/13.20px 'Liberation Sans', sans-serif;color:#000;letter-spacing:-0.1px;">Main.h</div>
<div style="position:absolute;left:22px;top:455px;width:9px;height:9px;border:1px solid #919b9c;border-radius:1px;background:linear-gradient(135deg,#fff,#d8d4c8)"><div style="position:absolute;left:2px;top:3px;width:5px;height:1px;background:#000"></div></div>
<div style="position:absolute;left:32px;top:459px;width:6px;height:1px;background:repeating-linear-gradient(90deg,#a0a0a0 0 1px,transparent 1px 2px)"></div>
<svg style="position:absolute;left:38px;top:451px" width="16" height="16"><path d="M2.5 1.5h8l3 3v10.5h-11z" fill="#f6f3e2" stroke="#5a5440"/><rect x="4.5" y="6.5" width="7" height="6" fill="none" stroke="#5a5440"/><rect x="5" y="9" width="2" height="2" fill="#5a5440"/><rect x="9" y="9" width="2" height="2" fill="#5a5440"/></svg>
<div style="position:absolute;left:58px;top:452.59px;white-space:pre;font:11px/13.20px 'Liberation Sans', sans-serif;color:#000;letter-spacing:-0.1px;">Measurel.cpp</div>
<div style="position:absolute;left:45px;top:477px;width:10px;height:1px;background:repeating-linear-gradient(90deg,#a0a0a0 0 1px,transparent 1px 2px)"></div>
<svg style="position:absolute;left:56px;top:469px" width="16" height="16"><path d="M2.5 1.5h8l3 3v10.5h-11z" fill="#fff" stroke="#404040"/><path d="M4 4.5h6M4 8.5h7M4 12.5h7" stroke="#d04040"/><path d="M4 6.5h7M4 10.5h7" stroke="#30a0a0"/><path d="M1 8.5h3" stroke="#c02020"/></svg>
<div style="position:absolute;left:76px;top:470.59px;white-space:pre;font:11px/13.20px 'Liberation Sans', sans-serif;color:#000;letter-spacing:-0.1px;">Measurel.cpp</div>
<div style="position:absolute;left:45px;top:495px;width:10px;height:1px;background:repeating-linear-gradient(90deg,#a0a0a0 0 1px,transparent 1px 2px)"></div>
<svg style="position:absolute;left:56px;top:487px" width="16" height="16"><path d="M2.5 1.5h8l3 3v10.5h-11z" fill="#fbf8ea" stroke="#a09870"/><path d="M4.5 4.5h3M4.5 8.5h3M4.5 12.5h3" stroke="#a09870"/><rect x="8.5" y="7.5" width="3" height="3" fill="none" stroke="#a09870"/></svg>
<div style="position:absolute;left:76px;top:488.59px;white-space:pre;font:11px/13.20px 'Liberation Sans', sans-serif;color:#000;letter-spacing:-0.1px;">Measurel.dfm</div>
<div style="position:absolute;left:45px;top:513px;width:10px;height:1px;background:repeating-linear-gradient(90deg,#a0a0a0 0 1px,transparent 1px 2px)"></div>
<svg style="position:absolute;left:56px;top:505px" width="16" height="16"><path d="M2.5 1.5h8l3 3v10.5h-11z" fill="#fff" stroke="#404040"/><path d="M4 4.5h6M4 6.5h7M4 8.5h7M4 10.5h7M4 12.5h7" stroke="#30a0a0"/></svg>
<div style="position:absolute;left:76px;top:506.59px;white-space:pre;font:11px/13.20px 'Liberation Sans', sans-serif;color:#000;letter-spacing:-0.1px;">Measurel.h</div>
<div style="position:absolute;left:22px;top:527px;width:9px;height:9px;border:1px solid #919b9c;border-radius:1px;background:linear-gradient(135deg,#fff,#d8d4c8)"><div style="position:absolute;left:2px;top:3px;width:5px;height:1px;background:#000"></div><div style="position:absolute;left:4px;top:1px;width:1px;height:5px;background:#000"></div></div>
<div style="position:absolute;left:32px;top:531px;width:6px;height:1px;background:repeating-linear-gradient(90deg,#a0a0a0 0 1px,transparent 1px 2px)"></div>
<svg style="position:absolute;left:38px;top:523px" width="16" height="16"><path d="M2.5 1.5h8l3 3v10.5h-11z" fill="#f6f3e2" stroke="#5a5440"/><rect x="4.5" y="6.5" width="7" height="6" fill="none" stroke="#5a5440"/><rect x="5" y="9" width="2" height="2" fill="#5a5440"/><rect x="9" y="9" width="2" height="2" fill="#5a5440"/></svg>
<div style="position:absolute;left:58px;top:524.59px;white-space:pre;font:11px/13.20px 'Liberation Sans', sans-serif;color:#000;letter-spacing:-0.1px;">Mesh.cpp</div>
<div style="position:absolute;left:26px;top:549px;width:12px;height:1px;background:repeating-linear-gradient(90deg,#a0a0a0 0 1px,transparent 1px 2px)"></div>
<svg style="position:absolute;left:38px;top:541px" width="16" height="16"><path d="M2.5 1.5h8l3 3v10.5h-11z" fill="#f4f0dc" stroke="#404040"/><rect x="4" y="5" width="8" height="3" fill="#3050c0"/><rect x="4.5" y="7.5" width="7" height="5" fill="#fff" stroke="#3050c0"/><path d="M7 9l-1.5 1L7 11M9 9l1.5 1L9 11" stroke="#202080" stroke-width="0.8" fill="none"/></svg>
<div style="position:absolute;left:58px;top:542.59px;white-space:pre;font:11px/13.20px 'Liberation Sans', sans-serif;color:#000;letter-spacing:-0.1px;">milbc.lib</div>
</div>
<div style="position:absolute;left:1286px;top:258px;width:17px;height:561px;background:linear-gradient(90deg,#f3f1ec,#fefefa)"></div>
<div style="position:absolute;left:1287px;top:259px;width:15px;height:15px;border:1px solid #fff;border-radius:2px;background:linear-gradient(135deg,#c8d6fb,#b8cbf7)"><svg style="position:absolute;left:2.5px;top:3.5px" width="10" height="7"><path d="M1 6L5 2L9 6" stroke="#4d6185" stroke-width="2" fill="none"/></svg></div>
<div style="position:absolute;left:1287px;top:803px;width:15px;height:15px;border:1px solid #fff;border-radius:2px;background:linear-gradient(135deg,#c8d6fb,#b8cbf7)"><svg style="position:absolute;left:2.5px;top:4.5px" width="10" height="7"><path d="M1 1L5 5L9 1" stroke="#4d6185" stroke-width="2" fill="none"/></svg></div>
<div style="position:absolute;left:1287px;top:289px;width:15px;height:428px;border:1px solid #fff;border-radius:2px;background:linear-gradient(90deg,#c8d6fb,#bacdf8)"></div>
<div style="position:absolute;left:1082px;top:819px;width:204px;height:16px;background:linear-gradient(#f3f1ec,#fefefa)"></div>
<div style="position:absolute;left:1083px;top:820px;width:14px;height:14px;border:1px solid #fff;border-radius:2px;background:linear-gradient(135deg,#c8d6fb,#b8cbf7)"><svg style="position:absolute;left:3.0px;top:2.0px" width="7" height="10"><path d="M6 1L2 5L6 9" stroke="#4d6185" stroke-width="2" fill="none"/></svg></div>
<div style="position:absolute;left:1271px;top:820px;width:14px;height:14px;border:1px solid #fff;border-radius:2px;background:linear-gradient(135deg,#c8d6fb,#b8cbf7)"><svg style="position:absolute;left:4.0px;top:2.0px" width="7" height="10"><path d="M1 1L5 5L1 9" stroke="#4d6185" stroke-width="2" fill="none"/></svg></div>
<div style="position:absolute;left:1100px;top:820px;width:75px;height:14px;border:1px solid #fff;border-radius:2px;background:linear-gradient(#c8d6fb,#bacdf8)"></div>
<div style="position:absolute;left:1286px;top:819px;width:18px;height:16px;background:#ece9d8"></div>
<div style="position:absolute;left:4px;top:836px;width:1300px;height:27px;background:linear-gradient(#f1efe5,#ece9d9 4px,#ebe8d8);border-bottom:1px solid #aca899"></div>
<div style="position:absolute;left:33px;top:844.59px;white-space:pre;font:11px/13.20px 'Liberation Sans', sans-serif;color:#000;letter-spacing:-0.17px;">Event Log</div>
<svg style="position:absolute;left:10px;top:841px" width="18" height="19"><rect x="4.5" y="5.5" width="11" height="12" fill="#f8f8f0" stroke="#202020"/><path d="M7 8.5h7M7 10.5h7M7 12.5h7M7 14.5h5" stroke="#7080a0"/><circle cx="3" cy="3.5" r="2" fill="none" stroke="#202020" stroke-width="1.3"/><circle cx="8" cy="3.5" r="2" fill="none" stroke="#202020" stroke-width="1.3"/><path d="M11 3h3.5v2.5" stroke="#202020" stroke-width="1.3" fill="none"/></svg>
<div style="position:absolute;left:1270px;top:844px;width:15px;height:15px;border:1px solid #cfcbb6;border-radius:3px;background:linear-gradient(#f8f7f0,#e6e2d0)"><svg style="position:absolute;left:2px;top:2px" width="10" height="12"><rect x="3" y="1" width="5" height="5" fill="#77735a"/><rect x="4" y="2" width="2" height="3" fill="#d8d4c0"/><path d="M1.5 6.5h8M5.5 7v4" stroke="#77735a" fill="none"/></svg></div>
<div style="position:absolute;left:1287px;top:844px;width:15px;height:15px;border:1px solid #cfcbb6;border-radius:3px;background:linear-gradient(#f8f7f0,#e6e2d0)"><svg style="position:absolute;left:2px;top:2px" width="11" height="11"><path d="M2 2L9 9M9 2L2 9" stroke="#6e6a55" stroke-width="3" stroke-linecap="round"/><path d="M2 2L9 9M9 2L2 9" stroke="#fff" stroke-width="1.2" stroke-linecap="round"/></svg></div>
<div style="position:absolute;left:4px;top:863px;width:1284px;height:158px;background:#fff"></div>
<div style="position:absolute;left:8px;top:864.59px;white-space:pre;font:11px/13.20px 'Liberation Sans', sans-serif;color:#000080;letter-spacing:-0.17px;">Module Load: MSVCR90.dll. No Debug Info. Base Address: $78520000. Process LSV.exe (2824)</div>
<div style="position:absolute;left:8px;top:880.59px;white-space:pre;font:11px/13.20px 'Liberation Sans', sans-serif;color:#000080;letter-spacing:-0.17px;">Module Load: MSVCP90.dll. No Debug Info. Base Address: $78480000. Process LSV.exe (2824)</div>
<div style="position:absolute;left:8px;top:896.59px;white-space:pre;font:11px/13.20px 'Liberation Sans', sans-serif;color:#800000;letter-spacing:-0.17px;">Thread Start: Thread ID: 260. Process LSV.exe (2824)</div>
<div style="position:absolute;left:8px;top:912.59px;white-space:pre;font:11px/13.20px 'Liberation Sans', sans-serif;color:#800000;letter-spacing:-0.17px;">Thread Start: Thread ID: 3508. Process LSV.exe (2824)</div>
<div style="position:absolute;left:8px;top:928.59px;white-space:pre;font:11px/13.20px 'Liberation Sans', sans-serif;color:#000080;letter-spacing:-0.17px;">Module Load: adc.acc. No Debug Info. Base Address: $03160000. Process LSV.exe (2824)</div>
<div style="position:absolute;left:8px;top:944.59px;white-space:pre;font:11px/13.20px 'Liberation Sans', sans-serif;color:#000080;letter-spacing:-0.17px;">Module Unload: adc.acc. Process LSV.exe (2824)</div>
<div style="position:absolute;left:8px;top:960.59px;white-space:pre;font:11px/13.20px 'Liberation Sans', sans-serif;color:#000080;letter-spacing:-0.17px;">Module Load: adc.acc. No Debug Info. Base Address: $03160000. Process LSV.exe (2824)</div>
<div style="position:absolute;left:8px;top:976.59px;white-space:pre;font:11px/13.20px 'Liberation Sans', sans-serif;color:#000080;letter-spacing:-0.17px;">Module Unload: adc.acc. Process LSV.exe (2824)</div>
<div style="position:absolute;left:4px;top:991px;width:1284px;height:16px;background:#ff0000"></div>
<div style="position:absolute;left:8px;top:992.59px;white-space:pre;font:11px/13.20px 'Liberation Sans', sans-serif;color:#fff;letter-spacing:-0.17px;">Source Breakpoint at $004551FD: D:₩Program₩LSVUpdate_120725_3D_6₩Main.cpp line 7209. Process LSV.exe (2824)</div>
<div style="position:absolute;left:1288px;top:863px;width:16px;height:158px;background:linear-gradient(90deg,#f3f1ec,#fefefa)"></div>
<div style="position:absolute;left:1289px;top:864px;width:14px;height:14px;border:1px solid #fff;border-radius:2px;background:linear-gradient(135deg,#c8d6fb,#b8cbf7)"><svg style="position:absolute;left:2.0px;top:3.0px" width="10" height="7"><path d="M1 6L5 2L9 6" stroke="#4d6185" stroke-width="2" fill="none"/></svg></div>
<div style="position:absolute;left:1289px;top:1006px;width:14px;height:14px;border:1px solid #fff;border-radius:2px;background:linear-gradient(135deg,#c8d6fb,#b8cbf7)"><svg style="position:absolute;left:2.0px;top:4.0px" width="10" height="7"><path d="M1 1L5 5L9 1" stroke="#4d6185" stroke-width="2" fill="none"/></svg></div>
<div style="position:absolute;left:1289px;top:988px;width:14px;height:14px;border:1px solid #fff;border-radius:2px;background:linear-gradient(90deg,#c8d6fb,#bacdf8)"></div>
<div style="position:absolute;left:4px;top:1021px;width:1300px;height:25px;background:#fff"></div>
<div style="position:absolute;left:4px;top:1023px;width:1300px;height:1px;background:#000"></div>
<div style="position:absolute;left:11px;top:1021px;width:74px;height:22px;background:#ece9d8;border:1px solid #000;border-top:none"></div>
<svg style="position:absolute;left:15px;top:1025px" width="17" height="17"><rect x="4.5" y="4.5" width="10" height="11" fill="#f8f8f0" stroke="#202020"/><path d="M7 7.5h6M7 9.5h6M7 11.5h6M7 13.5h4" stroke="#7080a0"/><circle cx="3" cy="3" r="2" fill="none" stroke="#202020" stroke-width="1.3"/><circle cx="8" cy="3" r="2" fill="none" stroke="#202020" stroke-width="1.3"/><path d="M11 2.5h3v2" stroke="#202020" stroke-width="1.3" fill="none"/></svg>
<div style="position:absolute;left:33px;top:1027.59px;white-space:pre;font:11px/13.20px 'Liberation Sans', sans-serif;color:#000;letter-spacing:-0.17px;">Event Log</div>
<svg style="position:absolute;left:89px;top:1024px" width="18" height="18"><circle cx="6" cy="6" r="4.5" fill="#e03020" stroke="#801010"/><circle cx="12" cy="10" r="3.5" fill="#f0a020" stroke="#a06010"/><circle cx="7" cy="13" r="3.5" fill="#f0a020" stroke="#a06010"/></svg>
<div style="position:absolute;left:108px;top:1027.59px;white-space:pre;font:11px/13.20px 'Liberation Sans', sans-serif;color:#000;letter-spacing:-0.17px;">Breakpoint List</div>
<div style="position:absolute;left:181px;top:1025px;width:1px;height:16px;background:#a0a0a0"></div>
<svg style="position:absolute;left:186px;top:1024px" width="18" height="18"><circle cx="6" cy="6" r="4.5" fill="#e03020" stroke="#801010"/><path d="M5 12l8-6 4 4-8 6z" fill="#40a0e0" stroke="#104080"/></svg>
<div style="position:absolute;left:205px;top:1027.59px;white-space:pre;font:11px/13.20px 'Liberation Sans', sans-serif;color:#000;letter-spacing:-0.17px;">Thread Status</div>
<div style="position:absolute;left:274px;top:1025px;width:1px;height:16px;background:#a0a0a0"></div>
</body></html>
